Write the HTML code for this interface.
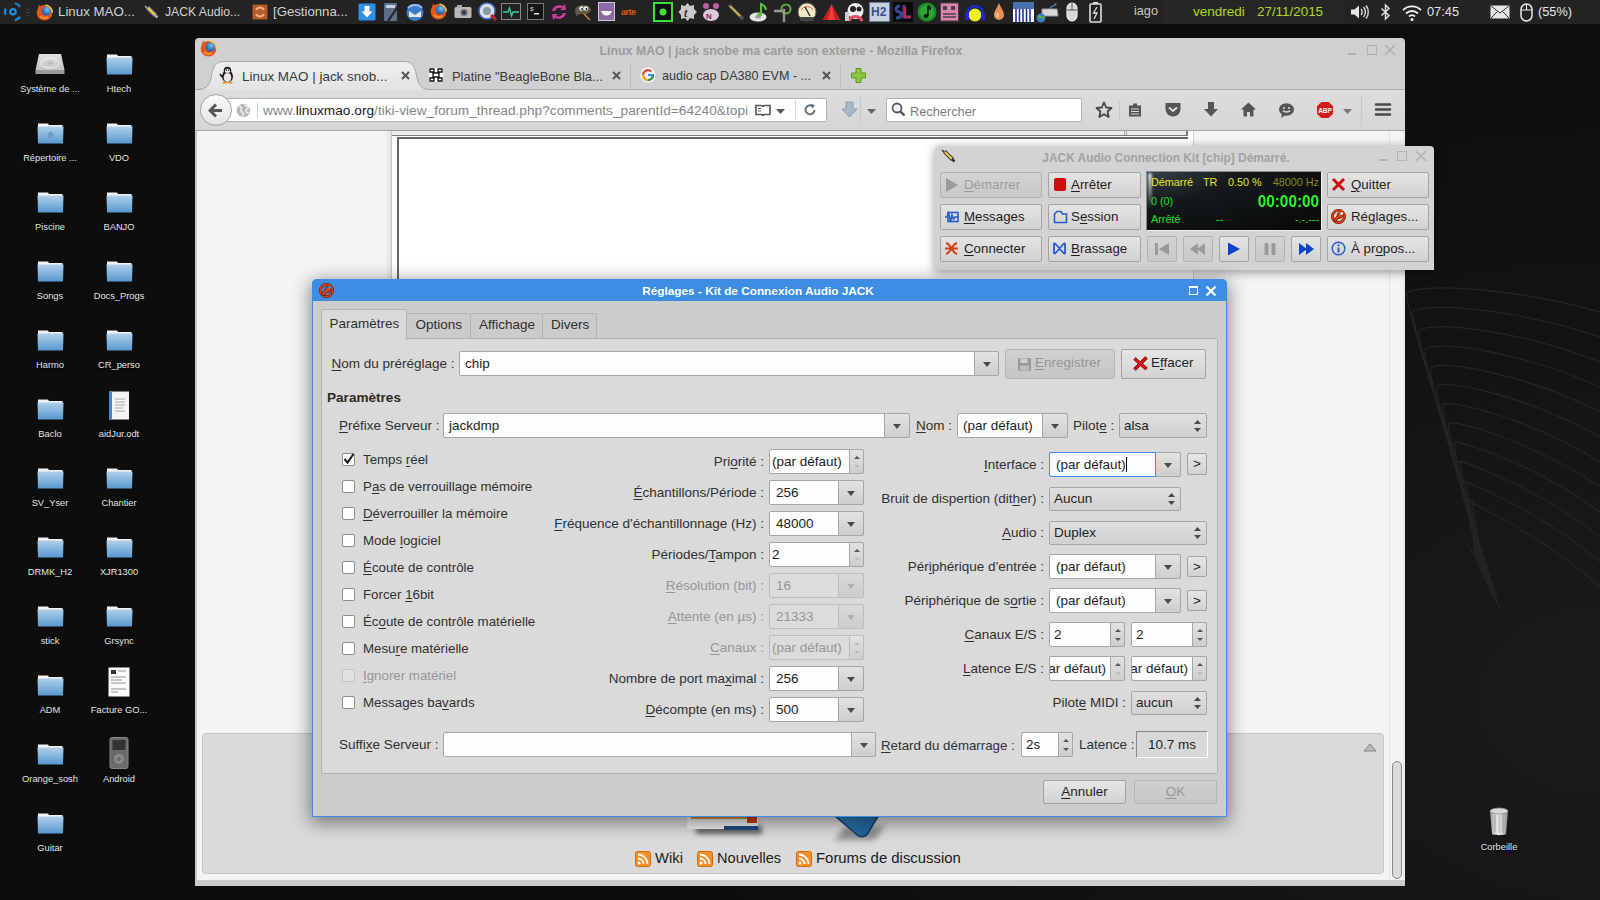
<!DOCTYPE html><html><head><meta charset="utf-8"><style>
html,body{margin:0;padding:0;} body{width:1600px;height:900px;overflow:hidden;position:relative;background:radial-gradient(ellipse 900px 700px at 1600px 700px, #1b1b1b 0%, #141414 45%, #0d0d0d 100%);font-family:'Liberation Sans', sans-serif;}
u{text-decoration:underline;text-underline-offset:2px;text-decoration-thickness:1px;}
</style></head><body>
<svg style="position:absolute;left:0;top:0" width="1600" height="900"><path d="M1600 312 C1530 292 1440 282 1407 292 C1403 296 1427 372 1500 610" stroke="#242424" stroke-width="1.3" fill="none"/><path d="M1600 337 C1530 313 1440 301 1413 311 C1409 315 1433 391 1497 604" stroke="#242424" stroke-width="1.3" fill="none"/><path d="M1600 362 C1530 334 1440 320 1419 330 C1415 334 1439 410 1494 598" stroke="#242424" stroke-width="1.3" fill="none"/><path d="M1600 387 C1530 355 1440 339 1425 349 C1421 353 1445 429 1491 592" stroke="#242424" stroke-width="1.3" fill="none"/><path d="M1600 412 C1530 376 1440 358 1431 368 C1427 372 1451 448 1488 586" stroke="#242424" stroke-width="1.3" fill="none"/><path d="M1600 437 C1530 397 1440 377 1437 387 C1433 391 1457 467 1485 580" stroke="#242424" stroke-width="1.3" fill="none"/><path d="M1600 462 C1530 418 1440 396 1443 406 C1439 410 1463 486 1482 574" stroke="#242424" stroke-width="1.3" fill="none"/><path d="M1600 487 C1530 439 1440 415 1449 425 C1445 429 1469 505 1479 568" stroke="#242424" stroke-width="1.3" fill="none"/><path d="M1600 512 C1530 460 1440 434 1455 444 C1451 448 1475 524 1476 562" stroke="#242424" stroke-width="1.3" fill="none"/><path d="M1600 537 C1530 481 1440 453 1461 463 C1457 467 1481 543 1473 556" stroke="#242424" stroke-width="1.3" fill="none"/><path d="M1600 562 C1530 502 1440 472 1467 482 C1463 486 1487 562 1470 550" stroke="#242424" stroke-width="1.3" fill="none"/><path d="M1600 587 C1530 523 1440 491 1473 501 C1469 505 1493 581 1467 544" stroke="#242424" stroke-width="1.3" fill="none"/></svg>
<div style="position:absolute;left:0px;top:0px;width:1600px;height:24px;background:#232323;"></div>
<svg style="position:absolute;left:0px;top:0px" width="22" height="22" viewBox="0 0 22 22"><circle cx="13" cy="11.7" r="2.7" fill="none" stroke="#1a8ee0" stroke-width="2.2"/><path d="M5.6 8.5 A8 8 0 0 0 5.6 14.9" stroke="#1a8ee0" stroke-width="2.2" fill="none"/><path d="M15 3.3 A8.6 8.6 0 0 1 20.1 6.8" stroke="#1a8ee0" stroke-width="2.2" fill="none"/><path d="M20.1 16.6 A8.6 8.6 0 0 1 15 20.1" stroke="#1a8ee0" stroke-width="2.2" fill="none"/></svg>
<div style="position:absolute;left:26px;top:9px;width:4px;height:1px;background:#3a3a3a;"></div>
<div style="position:absolute;left:26px;top:12px;width:4px;height:1px;background:#3a3a3a;"></div>
<div style="position:absolute;left:26px;top:15px;width:4px;height:1px;background:#3a3a3a;"></div>
<svg style="position:absolute;left:36px;top:4px" width="17" height="17" viewBox="0 0 17 17"><defs><radialGradient id="glb1" cx="0.6" cy="0.35" r="0.6"><stop offset="0" stop-color="#7ac0f0"/><stop offset="1" stop-color="#1f5fb0"/></radialGradient></defs><circle cx="8.5" cy="8.8" r="7.8" fill="#e4561a"/><circle cx="10.3" cy="6.9" r="4.6" fill="url(#glb1)"/><path d="M9.5 1 A7.8 7.8 0 0 1 16.3 8.5" stroke="#f8c23a" stroke-width="1.6" fill="none"/><path d="M1.8 5 L3 0.8 L5.6 3.5Z" fill="#e4561a"/><path d="M4 12 C6 14 9 14.5 12 13" stroke="#f39a30" stroke-width="1.4" fill="none"/></svg>
<div style="position:absolute;left:58px;top:3.0px;line-height:17px;font-size:13.3px;color:#d2d2d2;font-weight:normal;white-space:nowrap;">Linux MAO...</div>
<svg style="position:absolute;left:143px;top:4px" width="16" height="16" viewBox="0 0 16 16"><path d="M2 2 L5 5" stroke="#aaa" stroke-width="1.5"/><path d="M4.5 3.5 L12.5 11.5" stroke="#888" stroke-width="4"/><path d="M5 4 L12 11" stroke="#e8d040" stroke-width="2"/><path d="M12 11 L14.5 13.5" stroke="#aaa" stroke-width="2.5"/></svg>
<div style="position:absolute;left:165px;top:3.5px;line-height:16px;font-size:12.2px;color:#d2d2d2;font-weight:normal;white-space:nowrap;">JACK Audio...</div>
<svg style="position:absolute;left:252px;top:4px" width="16" height="16" viewBox="0 0 16 16"><rect x="0.5" y="0.5" width="15" height="15" fill="#b85a2a"/><path d="M4 6 A4.5 4.5 0 0 1 12 6 M12 10 A4.5 4.5 0 0 1 4 10" stroke="#f0b080" stroke-width="2" fill="none"/></svg>
<div style="position:absolute;left:273px;top:3.0px;line-height:17px;font-size:13.2px;color:#d2d2d2;font-weight:normal;white-space:nowrap;">[Gestionna...</div>
<svg style="position:absolute;left:358px;top:3px" width="18" height="18" viewBox="0 0 18 18"><rect x="0.5" y="0.5" width="17" height="17" rx="1" fill="#2c8fe8"/><path d="M6.5 3 H11.5 V8.5 H14.5 L9 14.5 L3.5 8.5 H6.5Z" fill="#fff"/></svg>
<svg style="position:absolute;left:383px;top:2px" width="17" height="20" viewBox="0 0 17 20"><rect x="1" y="1" width="13" height="18" rx="1" fill="#5a7085"/><rect x="3" y="3" width="9" height="3" fill="#ccd"/><path d="M16 3 L5 19" stroke="#222" stroke-width="2"/></svg>
<svg style="position:absolute;left:405px;top:3px" width="20" height="19" viewBox="0 0 20 19"><circle cx="10" cy="9.5" r="8.5" fill="#3c7cc8"/><path d="M4 8 L10 12 L16 8 V14 H4Z" fill="#e8e8e8"/><path d="M3 5 C6 1 14 1 17 5" stroke="#90c0f0" stroke-width="2" fill="none"/></svg>
<svg style="position:absolute;left:430px;top:3px" width="17" height="17" viewBox="0 0 17 17"><defs><radialGradient id="glb2" cx="0.6" cy="0.35" r="0.6"><stop offset="0" stop-color="#7ac0f0"/><stop offset="1" stop-color="#1f5fb0"/></radialGradient></defs><circle cx="8.5" cy="8.8" r="7.8" fill="#e4561a"/><circle cx="10.3" cy="6.9" r="4.6" fill="url(#glb2)"/><path d="M9.5 1 A7.8 7.8 0 0 1 16.3 8.5" stroke="#f8c23a" stroke-width="1.6" fill="none"/><path d="M1.8 5 L3 0.8 L5.6 3.5Z" fill="#e4561a"/><path d="M4 12 C6 14 9 14.5 12 13" stroke="#f39a30" stroke-width="1.4" fill="none"/></svg>
<svg style="position:absolute;left:454px;top:4px" width="18" height="15" viewBox="0 0 18 15"><rect x="0.5" y="3" width="17" height="11" rx="1.5" fill="#b8b8b8"/><rect x="3" y="1" width="5" height="3" fill="#aaa"/><circle cx="10" cy="8.5" r="3.5" fill="#6a6a7a"/><circle cx="10" cy="8.5" r="1.8" fill="#303040"/></svg>
<svg style="position:absolute;left:478px;top:2px" width="20" height="20" viewBox="0 0 20 20"><circle cx="9" cy="9" r="8" fill="#dde" stroke="#3a70c0" stroke-width="1.5"/><circle cx="9" cy="9" r="4" fill="#8898a8"/><path d="M13 13 L18 18" stroke="#d02020" stroke-width="3"/></svg>
<svg style="position:absolute;left:501px;top:3px" width="20" height="17" viewBox="0 0 20 17"><rect x="0.5" y="0.5" width="19" height="16" fill="#222" stroke="#888"/><path d="M2 9 H7 L8.5 5 L10.5 13 L12 9 H18" stroke="#3ad0a0" stroke-width="1.3" fill="none"/></svg>
<svg style="position:absolute;left:527px;top:3px" width="17" height="17" viewBox="0 0 17 17"><rect x="0.5" y="0.5" width="16" height="16" fill="#151515" stroke="#777"/><text x="3" y="8" font-size="6" fill="#eee" font-family="Liberation Mono">$</text><rect x="7" y="10" width="5" height="1.5" fill="#eee"/></svg>
<svg style="position:absolute;left:549px;top:2px" width="20" height="20" viewBox="0 0 20 20"><path d="M3 9 C4 4 9 2 14 4 L16 2 L17 8 L11 8 L13 6 C10 5 7 6 6 9Z" fill="#c83c98"/><path d="M17 11 C16 16 11 18 6 16 L4 18 L3 12 L9 12 L7 14 C10 15 13 14 14 11Z" fill="#c83c98"/></svg>
<svg style="position:absolute;left:574px;top:2px" width="18" height="19" viewBox="0 0 18 19"><path d="M1 8 C2 2 15 1 17 7 C17 12 10 13 6 12 L2 14Z" fill="#5e5a4a"/><circle cx="7.5" cy="6.5" r="2.3" fill="#f0f0f0"/><circle cx="12" cy="6.5" r="2.3" fill="#f0f0f0"/><circle cx="8" cy="7" r="1" fill="#222"/><circle cx="12.5" cy="7" r="1" fill="#222"/><path d="M10 12 L16 18" stroke="#c8802a" stroke-width="1.6"/></svg>
<svg style="position:absolute;left:598px;top:2px" width="17" height="19" viewBox="0 0 17 19"><rect x="0.5" y="0.5" width="16" height="18" fill="#8a6aa8" stroke="#ccc"/><path d="M3 9 C5 15 12 15 14 9Z" fill="#fff"/></svg>
<div style="position:absolute;left:621px;top:6.0px;line-height:12px;font-size:9px;color:#e05a10;font-weight:normal;white-space:nowrap;"><b style="letter-spacing:-0.5px">arte</b></div>
<svg style="position:absolute;left:653px;top:2px" width="20" height="20" viewBox="0 0 20 20"><rect x="1" y="1" width="18" height="18" fill="#111" stroke="#3ce03c" stroke-width="2"/><circle cx="10" cy="10" r="3.5" fill="#3ce03c"/></svg>
<svg style="position:absolute;left:678px;top:2px" width="19" height="20" viewBox="0 0 19 20"><path d="M9.5 1 L12 4 L16 3 L16 7 L19 10 L16 13 L16 17 L12 16 L9.5 19 L7 16 L3 17 L3 13 L0.5 10 L3 7 L3 3 L7 4Z" fill="#c8c8c8"/><text x="6" y="15" font-size="12" font-style="italic" font-weight="bold" fill="#333" font-family="Liberation Serif">t</text></svg>
<svg style="position:absolute;left:701px;top:2px" width="20" height="20" viewBox="0 0 20 20"><ellipse cx="10" cy="13" rx="8" ry="6" fill="#e0c8d8"/><circle cx="5" cy="4" r="3" fill="#c060a0"/><circle cx="15" cy="4" r="3" fill="#c060a0"/><text x="5" y="17" font-size="8" font-weight="bold" fill="#802060" font-family="Liberation Sans">N</text></svg>
<svg style="position:absolute;left:726px;top:2px" width="20" height="20" viewBox="0 0 20 20"><path d="M3 3 L17 17" stroke="#555" stroke-width="3.5"/><path d="M4 4 L14 14" stroke="#e0c040" stroke-width="1.6"/></svg>
<svg style="position:absolute;left:749px;top:2px" width="21" height="20" viewBox="0 0 21 20"><ellipse cx="9" cy="15" rx="8.5" ry="4.5" fill="#e6e6e6"/><ellipse cx="9" cy="15" rx="3" ry="1.5" fill="#9a9"/><path d="M12 14 V2 C14 3 17 4 17 8" stroke="#60c040" stroke-width="2" fill="none"/><ellipse cx="10" cy="13" rx="2.5" ry="2" fill="#60c040"/></svg>
<svg style="position:absolute;left:773px;top:2px" width="20" height="21" viewBox="0 0 20 21"><circle cx="13" cy="7" r="4.5" fill="none" stroke="#60b030" stroke-width="2"/><path d="M1 9 H9 M11 7 V20" stroke="#999" stroke-width="2.4"/></svg>
<svg style="position:absolute;left:797px;top:2px" width="20" height="20" viewBox="0 0 20 20"><circle cx="10" cy="10" r="9" fill="#f0e8c0" stroke="#666"/><path d="M4 8 A7 7 0 0 1 16 8" stroke="#d06060" stroke-width="1" fill="none"/><path d="M8 5 L13 14" stroke="#333" stroke-width="1.5"/><path d="M3 15 H17 V19 H3Z" fill="#444"/></svg>
<svg style="position:absolute;left:822px;top:3px" width="19" height="18" viewBox="0 0 19 18"><path d="M9.5 1 L18.5 17 H0.5Z" fill="#c82020"/><path d="M9.5 1 L13 17 H6Z" fill="#e84040"/></svg>
<svg style="position:absolute;left:845px;top:2px" width="21" height="21" viewBox="0 0 21 21"><circle cx="10.5" cy="9" r="8" fill="#f0f0f0"/><circle cx="8" cy="7" r="3" fill="#222"/><circle cx="14" cy="7" r="2.5" fill="#222"/><path d="M4 19 C6 13 15 13 17 19" stroke="#e05060" stroke-width="3" fill="none"/><rect x="0" y="10" width="4" height="9" fill="#ccc"/></svg>
<svg style="position:absolute;left:869px;top:2px" width="21" height="20" viewBox="0 0 21 20"><rect x="0.5" y="0.5" width="20" height="19" fill="#c8d0e0" stroke="#6878a0"/><text x="2" y="14" font-size="12" font-weight="bold" fill="#34508a" font-family="Liberation Sans">H2</text></svg>
<svg style="position:absolute;left:893px;top:2px" width="20" height="20" viewBox="0 0 20 20"><rect width="20" height="20" fill="#0a0a0a"/><path d="M7 4 C2 4 2 9 6 10 C10 11 9 16 3 16 M11 3 V15 H18" stroke="#3a4a90" stroke-width="3" fill="none"/><path d="M12 5 V15 H18" stroke="#b03050" stroke-width="2.5" fill="none"/></svg>
<svg style="position:absolute;left:917px;top:2px" width="20" height="20" viewBox="0 0 20 20"><circle cx="10" cy="10" r="9.5" fill="#1f8a2a"/><circle cx="10" cy="10" r="7" fill="#2aa830"/><path d="M11 4 V14" stroke="#111" stroke-width="1.6"/><ellipse cx="9" cy="14" rx="2.5" ry="2" fill="#111"/><path d="M11 4 C13 5 14 6 13 8" stroke="#111" stroke-width="1.5" fill="none"/></svg>
<svg style="position:absolute;left:940px;top:2px" width="19" height="20" viewBox="0 0 19 20"><rect x="0.5" y="1" width="18" height="18" rx="1" fill="#e080b0" stroke="#444"/><rect x="3" y="4" width="4" height="4" fill="#444"/><rect x="11" y="4" width="4" height="4" fill="#444"/><path d="M3 12 H16 M3 15 H16" stroke="#444" stroke-width="1.5"/></svg>
<svg style="position:absolute;left:964px;top:2px" width="22" height="20" viewBox="0 0 22 20"><path d="M3 12 A8 8 0 0 1 19 12" stroke="#1a2ad0" stroke-width="2.5" fill="none"/><ellipse cx="11" cy="13" rx="6.5" ry="6.5" fill="#f0f020"/><rect x="1" y="11" width="4" height="7" rx="1" fill="#1a2ad0"/><rect x="17" y="11" width="4" height="7" rx="1" fill="#1a2ad0"/></svg>
<svg style="position:absolute;left:993px;top:2px" width="12" height="20" viewBox="0 0 12 20"><path d="M6 1 C8 6 11 9 11 13 A5 5 0 0 1 1 13 C1 9 4 6 6 1Z" fill="#e89050"/><ellipse cx="4.5" cy="13" rx="1.5" ry="2.5" fill="#f8c090"/></svg>
<svg style="position:absolute;left:1013px;top:2px" width="21" height="20" viewBox="0 0 21 20"><rect x="0" y="0" width="21" height="7" fill="#4a70b0"/><rect x="0" y="7" width="21" height="13" fill="#fff"/><path d="M3 7 V20 M6.5 7 V20 M10 7 V20 M13.5 7 V20 M17 7 V20" stroke="#1a2a90" stroke-width="1.5"/></svg>
<svg style="position:absolute;left:1036px;top:2px" width="23" height="21" viewBox="0 0 23 21"><path d="M6 7 L21 7 L22 14 L6 14Z" fill="#d8d8d8" stroke="#999"/><path d="M14 7 C14 3 20 5 20 1" stroke="#6090c0" stroke-width="1.2" fill="none"/><circle cx="5" cy="16" r="4.5" fill="#3a80c0"/><path d="M2 15 C4 13 6 17 8 15" stroke="#60b040" stroke-width="2" fill="none"/></svg>
<svg style="position:absolute;left:1066px;top:2px" width="12" height="20" viewBox="0 0 12 20"><rect x="1" y="1" width="10" height="18" rx="5" fill="#d8d8d8" stroke="#fff"/><path d="M6 1 V8 M1 8 H11" stroke="#555" stroke-width="1"/></svg>
<svg style="position:absolute;left:1089px;top:1px" width="13" height="22" viewBox="0 0 13 22"><rect x="4" y="1" width="5" height="2" fill="#ddd"/><rect x="1" y="3" width="11" height="18" rx="1" fill="none" stroke="#ddd" stroke-width="1.6"/><path d="M8 6 L4.5 12 H8 L5 18" stroke="#ddd" stroke-width="1.3" fill="none"/></svg>
<div style="position:absolute;left:1162px;top:0px;width:183px;height:24px;background:#262626;"></div>
<div style="position:absolute;left:1134px;top:3.0px;line-height:17px;font-size:12.7px;color:#c8c8c8;font-weight:normal;white-space:nowrap;">iago</div>
<div style="position:absolute;left:1193px;top:2.5px;line-height:18px;font-size:13.5px;color:#aedb1e;font-weight:normal;white-space:nowrap;">vendredi</div>
<div style="position:absolute;left:1257px;top:3.0px;line-height:17px;font-size:13.4px;color:#aedb1e;font-weight:normal;white-space:nowrap;">27/11/2015</div>
<svg style="position:absolute;left:1350px;top:4px" width="19" height="16" viewBox="0 0 19 16"><path d="M1 5.5 H4.5 L9 1.5 V14.5 L4.5 10.5 H1Z" fill="#e8e8e8"/><path d="M11 5 C12.5 6.5 12.5 9.5 11 11 M13.5 3 C16 5.5 16 10.5 13.5 13 M16 1.5 C19 4.5 19 11.5 16 14.5" stroke="#e8e8e8" stroke-width="1.3" fill="none"/></svg>
<svg style="position:absolute;left:1380px;top:3px" width="11" height="18" viewBox="0 0 11 18"><path d="M1.5 5.5 L9 12.5 L5.5 16 V2 L9 5.5 L1.5 12.5" stroke="#e0e0e0" stroke-width="1.5" fill="none"/></svg>
<svg style="position:absolute;left:1401px;top:4px" width="22" height="17" viewBox="0 0 22 17"><path d="M2 6 A13 13 0 0 1 20 6 M5 9.5 A8.5 8.5 0 0 1 17 9.5 M8 12.5 A4.5 4.5 0 0 1 14 12.5" stroke="#f0f0f0" stroke-width="1.8" fill="none"/><circle cx="11" cy="15.5" r="1.5" fill="#f0f0f0"/></svg>
<div style="position:absolute;left:1427px;top:3.0px;line-height:17px;font-size:12.8px;color:#e8e8e8;font-weight:normal;white-space:nowrap;">07:45</div>
<svg style="position:absolute;left:1490px;top:5px" width="20" height="14" viewBox="0 0 20 14"><rect x="0.5" y="0.5" width="19" height="13" fill="#e8e8e8"/><path d="M1 1 L10 8 L19 1 M1 13 L7.5 6.5 M19 13 L12.5 6.5" stroke="#333" stroke-width="1" fill="none"/></svg>
<svg style="position:absolute;left:1520px;top:3px" width="13" height="19" viewBox="0 0 13 19"><rect x="1" y="1" width="11" height="17" rx="5.5" fill="none" stroke="#e8e8e8" stroke-width="1.5"/><path d="M6.5 1 V7 M1 7 H12" stroke="#e8e8e8" stroke-width="1.2"/></svg>
<div style="position:absolute;left:1538px;top:3.0px;line-height:17px;font-size:12.75px;color:#e8e8e8;font-weight:normal;white-space:nowrap;">(55%)</div>
<svg style="position:absolute;left:35px;top:53px" width="30" height="22" viewBox="0 0 30 22"><defs><linearGradient id="dg" x1="0" y1="0" x2="0" y2="1"><stop offset="0" stop-color="#e0e0e0"/><stop offset="1" stop-color="#c4c4c4"/></linearGradient></defs><path d="M4 1 H26 L29.5 17 H0.5Z" fill="url(#dg)"/><ellipse cx="15" cy="10" rx="9" ry="5" fill="none" stroke="#f4f4f4" stroke-width="1"/><ellipse cx="15" cy="10" rx="3" ry="1.5" fill="#bbb"/><rect x="0.5" y="17" width="29" height="4" fill="#9a9a9a"/></svg>
<div style="position:absolute;left:-150px;width:400px;text-align:center;top:82.8px;line-height:12px;font-size:9.3px;color:#e6e6e6;font-weight:normal;white-space:nowrap;text-shadow:0 1px 2px #000;">Système de ...</div>
<svg style="position:absolute;left:36.5px;top:122px" width="27" height="22" viewBox="0 0 27 22"><defs><linearGradient id="fg" x1="0" y1="0" x2="0" y2="1"><stop offset="0" stop-color="#b0d0ea"/><stop offset="1" stop-color="#5898cf"/></linearGradient></defs><path d="M1 1.5 H11 L12 3 H25.5 V5 H1Z" fill="#f2f2f2"/><path d="M0.5 4.5 H26.5 L26 21.5 H1Z" fill="url(#fg)"/><path d="M13.5 9 L17.5 13 H16 V16 H11 V13 H9.5Z" fill="#6a9cc8"/></svg>
<div style="position:absolute;left:-150px;width:400px;text-align:center;top:151.8px;line-height:12px;font-size:9.3px;color:#e6e6e6;font-weight:normal;white-space:nowrap;text-shadow:0 1px 2px #000;">Répertoire ...</div>
<svg style="position:absolute;left:36.5px;top:191px" width="27" height="22" viewBox="0 0 27 22"><defs><linearGradient id="fg" x1="0" y1="0" x2="0" y2="1"><stop offset="0" stop-color="#b0d0ea"/><stop offset="1" stop-color="#5898cf"/></linearGradient></defs><path d="M1 1.5 H11 L12 3 H25.5 V5 H1Z" fill="#f2f2f2"/><path d="M0.5 4.5 H26.5 L26 21.5 H1Z" fill="url(#fg)"/></svg>
<div style="position:absolute;left:-150px;width:400px;text-align:center;top:220.8px;line-height:12px;font-size:9.3px;color:#e6e6e6;font-weight:normal;white-space:nowrap;text-shadow:0 1px 2px #000;">Piscine</div>
<svg style="position:absolute;left:36.5px;top:260px" width="27" height="22" viewBox="0 0 27 22"><defs><linearGradient id="fg" x1="0" y1="0" x2="0" y2="1"><stop offset="0" stop-color="#b0d0ea"/><stop offset="1" stop-color="#5898cf"/></linearGradient></defs><path d="M1 1.5 H11 L12 3 H25.5 V5 H1Z" fill="#f2f2f2"/><path d="M0.5 4.5 H26.5 L26 21.5 H1Z" fill="url(#fg)"/></svg>
<div style="position:absolute;left:-150px;width:400px;text-align:center;top:289.8px;line-height:12px;font-size:9.3px;color:#e6e6e6;font-weight:normal;white-space:nowrap;text-shadow:0 1px 2px #000;">Songs</div>
<svg style="position:absolute;left:36.5px;top:329px" width="27" height="22" viewBox="0 0 27 22"><defs><linearGradient id="fg" x1="0" y1="0" x2="0" y2="1"><stop offset="0" stop-color="#b0d0ea"/><stop offset="1" stop-color="#5898cf"/></linearGradient></defs><path d="M1 1.5 H11 L12 3 H25.5 V5 H1Z" fill="#f2f2f2"/><path d="M0.5 4.5 H26.5 L26 21.5 H1Z" fill="url(#fg)"/></svg>
<div style="position:absolute;left:-150px;width:400px;text-align:center;top:358.8px;line-height:12px;font-size:9.3px;color:#e6e6e6;font-weight:normal;white-space:nowrap;text-shadow:0 1px 2px #000;">Harmo</div>
<svg style="position:absolute;left:36.5px;top:398px" width="27" height="22" viewBox="0 0 27 22"><defs><linearGradient id="fg" x1="0" y1="0" x2="0" y2="1"><stop offset="0" stop-color="#b0d0ea"/><stop offset="1" stop-color="#5898cf"/></linearGradient></defs><path d="M1 1.5 H11 L12 3 H25.5 V5 H1Z" fill="#f2f2f2"/><path d="M0.5 4.5 H26.5 L26 21.5 H1Z" fill="url(#fg)"/></svg>
<div style="position:absolute;left:-150px;width:400px;text-align:center;top:427.8px;line-height:12px;font-size:9.3px;color:#e6e6e6;font-weight:normal;white-space:nowrap;text-shadow:0 1px 2px #000;">Baclo</div>
<svg style="position:absolute;left:36.5px;top:467px" width="27" height="22" viewBox="0 0 27 22"><defs><linearGradient id="fg" x1="0" y1="0" x2="0" y2="1"><stop offset="0" stop-color="#b0d0ea"/><stop offset="1" stop-color="#5898cf"/></linearGradient></defs><path d="M1 1.5 H11 L12 3 H25.5 V5 H1Z" fill="#f2f2f2"/><path d="M0.5 4.5 H26.5 L26 21.5 H1Z" fill="url(#fg)"/></svg>
<div style="position:absolute;left:-150px;width:400px;text-align:center;top:496.8px;line-height:12px;font-size:9.3px;color:#e6e6e6;font-weight:normal;white-space:nowrap;text-shadow:0 1px 2px #000;">SV_Yser</div>
<svg style="position:absolute;left:36.5px;top:536px" width="27" height="22" viewBox="0 0 27 22"><defs><linearGradient id="fg" x1="0" y1="0" x2="0" y2="1"><stop offset="0" stop-color="#b0d0ea"/><stop offset="1" stop-color="#5898cf"/></linearGradient></defs><path d="M1 1.5 H11 L12 3 H25.5 V5 H1Z" fill="#f2f2f2"/><path d="M0.5 4.5 H26.5 L26 21.5 H1Z" fill="url(#fg)"/></svg>
<div style="position:absolute;left:-150px;width:400px;text-align:center;top:565.8px;line-height:12px;font-size:9.3px;color:#e6e6e6;font-weight:normal;white-space:nowrap;text-shadow:0 1px 2px #000;">DRMK_H2</div>
<svg style="position:absolute;left:36.5px;top:605px" width="27" height="22" viewBox="0 0 27 22"><defs><linearGradient id="fg" x1="0" y1="0" x2="0" y2="1"><stop offset="0" stop-color="#b0d0ea"/><stop offset="1" stop-color="#5898cf"/></linearGradient></defs><path d="M1 1.5 H11 L12 3 H25.5 V5 H1Z" fill="#f2f2f2"/><path d="M0.5 4.5 H26.5 L26 21.5 H1Z" fill="url(#fg)"/></svg>
<div style="position:absolute;left:-150px;width:400px;text-align:center;top:634.8px;line-height:12px;font-size:9.3px;color:#e6e6e6;font-weight:normal;white-space:nowrap;text-shadow:0 1px 2px #000;">stick</div>
<svg style="position:absolute;left:36.5px;top:674px" width="27" height="22" viewBox="0 0 27 22"><defs><linearGradient id="fg" x1="0" y1="0" x2="0" y2="1"><stop offset="0" stop-color="#b0d0ea"/><stop offset="1" stop-color="#5898cf"/></linearGradient></defs><path d="M1 1.5 H11 L12 3 H25.5 V5 H1Z" fill="#f2f2f2"/><path d="M0.5 4.5 H26.5 L26 21.5 H1Z" fill="url(#fg)"/></svg>
<div style="position:absolute;left:-150px;width:400px;text-align:center;top:703.8px;line-height:12px;font-size:9.3px;color:#e6e6e6;font-weight:normal;white-space:nowrap;text-shadow:0 1px 2px #000;">ADM</div>
<svg style="position:absolute;left:36.5px;top:743px" width="27" height="22" viewBox="0 0 27 22"><defs><linearGradient id="fg" x1="0" y1="0" x2="0" y2="1"><stop offset="0" stop-color="#b0d0ea"/><stop offset="1" stop-color="#5898cf"/></linearGradient></defs><path d="M1 1.5 H11 L12 3 H25.5 V5 H1Z" fill="#f2f2f2"/><path d="M0.5 4.5 H26.5 L26 21.5 H1Z" fill="url(#fg)"/></svg>
<div style="position:absolute;left:-150px;width:400px;text-align:center;top:772.8px;line-height:12px;font-size:9.3px;color:#e6e6e6;font-weight:normal;white-space:nowrap;text-shadow:0 1px 2px #000;">Orange_sosh</div>
<svg style="position:absolute;left:36.5px;top:812px" width="27" height="22" viewBox="0 0 27 22"><defs><linearGradient id="fg" x1="0" y1="0" x2="0" y2="1"><stop offset="0" stop-color="#b0d0ea"/><stop offset="1" stop-color="#5898cf"/></linearGradient></defs><path d="M1 1.5 H11 L12 3 H25.5 V5 H1Z" fill="#f2f2f2"/><path d="M0.5 4.5 H26.5 L26 21.5 H1Z" fill="url(#fg)"/></svg>
<div style="position:absolute;left:-150px;width:400px;text-align:center;top:841.8px;line-height:12px;font-size:9.3px;color:#e6e6e6;font-weight:normal;white-space:nowrap;text-shadow:0 1px 2px #000;">Guitar</div>
<svg style="position:absolute;left:105.5px;top:53px" width="27" height="22" viewBox="0 0 27 22"><defs><linearGradient id="fg" x1="0" y1="0" x2="0" y2="1"><stop offset="0" stop-color="#b0d0ea"/><stop offset="1" stop-color="#5898cf"/></linearGradient></defs><path d="M1 1.5 H11 L12 3 H25.5 V5 H1Z" fill="#f2f2f2"/><path d="M0.5 4.5 H26.5 L26 21.5 H1Z" fill="url(#fg)"/></svg>
<div style="position:absolute;left:-81px;width:400px;text-align:center;top:82.8px;line-height:12px;font-size:9.3px;color:#e6e6e6;font-weight:normal;white-space:nowrap;text-shadow:0 1px 2px #000;">Htech</div>
<svg style="position:absolute;left:105.5px;top:122px" width="27" height="22" viewBox="0 0 27 22"><defs><linearGradient id="fg" x1="0" y1="0" x2="0" y2="1"><stop offset="0" stop-color="#b0d0ea"/><stop offset="1" stop-color="#5898cf"/></linearGradient></defs><path d="M1 1.5 H11 L12 3 H25.5 V5 H1Z" fill="#f2f2f2"/><path d="M0.5 4.5 H26.5 L26 21.5 H1Z" fill="url(#fg)"/></svg>
<div style="position:absolute;left:-81px;width:400px;text-align:center;top:151.8px;line-height:12px;font-size:9.3px;color:#e6e6e6;font-weight:normal;white-space:nowrap;text-shadow:0 1px 2px #000;">VDO</div>
<svg style="position:absolute;left:105.5px;top:191px" width="27" height="22" viewBox="0 0 27 22"><defs><linearGradient id="fg" x1="0" y1="0" x2="0" y2="1"><stop offset="0" stop-color="#b0d0ea"/><stop offset="1" stop-color="#5898cf"/></linearGradient></defs><path d="M1 1.5 H11 L12 3 H25.5 V5 H1Z" fill="#f2f2f2"/><path d="M0.5 4.5 H26.5 L26 21.5 H1Z" fill="url(#fg)"/></svg>
<div style="position:absolute;left:-81px;width:400px;text-align:center;top:220.8px;line-height:12px;font-size:9.3px;color:#e6e6e6;font-weight:normal;white-space:nowrap;text-shadow:0 1px 2px #000;">BANJO</div>
<svg style="position:absolute;left:105.5px;top:260px" width="27" height="22" viewBox="0 0 27 22"><defs><linearGradient id="fg" x1="0" y1="0" x2="0" y2="1"><stop offset="0" stop-color="#b0d0ea"/><stop offset="1" stop-color="#5898cf"/></linearGradient></defs><path d="M1 1.5 H11 L12 3 H25.5 V5 H1Z" fill="#f2f2f2"/><path d="M0.5 4.5 H26.5 L26 21.5 H1Z" fill="url(#fg)"/></svg>
<div style="position:absolute;left:-81px;width:400px;text-align:center;top:289.8px;line-height:12px;font-size:9.3px;color:#e6e6e6;font-weight:normal;white-space:nowrap;text-shadow:0 1px 2px #000;">Docs_Progs</div>
<svg style="position:absolute;left:105.5px;top:329px" width="27" height="22" viewBox="0 0 27 22"><defs><linearGradient id="fg" x1="0" y1="0" x2="0" y2="1"><stop offset="0" stop-color="#b0d0ea"/><stop offset="1" stop-color="#5898cf"/></linearGradient></defs><path d="M1 1.5 H11 L12 3 H25.5 V5 H1Z" fill="#f2f2f2"/><path d="M0.5 4.5 H26.5 L26 21.5 H1Z" fill="url(#fg)"/></svg>
<div style="position:absolute;left:-81px;width:400px;text-align:center;top:358.8px;line-height:12px;font-size:9.3px;color:#e6e6e6;font-weight:normal;white-space:nowrap;text-shadow:0 1px 2px #000;">CR_perso</div>
<svg style="position:absolute;left:107px;top:391px" width="24" height="30" viewBox="0 0 24 30"><rect x="2" y="0.5" width="20" height="28" fill="#f4f4f4"/><rect x="2" y="0.5" width="3" height="28" fill="#3a8ad8"/><path d="M8 8 H18 M8 11 H18 M8 14 H18 M8 17 H16 M8 20 H18" stroke="#aaa" stroke-width="1"/></svg>
<div style="position:absolute;left:-81px;width:400px;text-align:center;top:427.8px;line-height:12px;font-size:9.3px;color:#e6e6e6;font-weight:normal;white-space:nowrap;text-shadow:0 1px 2px #000;">aidJur.odt</div>
<svg style="position:absolute;left:105.5px;top:467px" width="27" height="22" viewBox="0 0 27 22"><defs><linearGradient id="fg" x1="0" y1="0" x2="0" y2="1"><stop offset="0" stop-color="#b0d0ea"/><stop offset="1" stop-color="#5898cf"/></linearGradient></defs><path d="M1 1.5 H11 L12 3 H25.5 V5 H1Z" fill="#f2f2f2"/><path d="M0.5 4.5 H26.5 L26 21.5 H1Z" fill="url(#fg)"/></svg>
<div style="position:absolute;left:-81px;width:400px;text-align:center;top:496.8px;line-height:12px;font-size:9.3px;color:#e6e6e6;font-weight:normal;white-space:nowrap;text-shadow:0 1px 2px #000;">Chantier</div>
<svg style="position:absolute;left:105.5px;top:536px" width="27" height="22" viewBox="0 0 27 22"><defs><linearGradient id="fg" x1="0" y1="0" x2="0" y2="1"><stop offset="0" stop-color="#b0d0ea"/><stop offset="1" stop-color="#5898cf"/></linearGradient></defs><path d="M1 1.5 H11 L12 3 H25.5 V5 H1Z" fill="#f2f2f2"/><path d="M0.5 4.5 H26.5 L26 21.5 H1Z" fill="url(#fg)"/></svg>
<div style="position:absolute;left:-81px;width:400px;text-align:center;top:565.8px;line-height:12px;font-size:9.3px;color:#e6e6e6;font-weight:normal;white-space:nowrap;text-shadow:0 1px 2px #000;">XJR1300</div>
<svg style="position:absolute;left:105.5px;top:605px" width="27" height="22" viewBox="0 0 27 22"><defs><linearGradient id="fg" x1="0" y1="0" x2="0" y2="1"><stop offset="0" stop-color="#b0d0ea"/><stop offset="1" stop-color="#5898cf"/></linearGradient></defs><path d="M1 1.5 H11 L12 3 H25.5 V5 H1Z" fill="#f2f2f2"/><path d="M0.5 4.5 H26.5 L26 21.5 H1Z" fill="url(#fg)"/></svg>
<div style="position:absolute;left:-81px;width:400px;text-align:center;top:634.8px;line-height:12px;font-size:9.3px;color:#e6e6e6;font-weight:normal;white-space:nowrap;text-shadow:0 1px 2px #000;">Grsync</div>
<svg style="position:absolute;left:108px;top:667px" width="22" height="30" viewBox="0 0 22 30"><rect x="0.5" y="0.5" width="21" height="29" fill="#fafafa"/><rect x="3" y="3" width="5" height="4" fill="#333"/><path d="M10 4 H18 M3 10 H18 M3 13 H14 M3 16 H18 M3 22 H18 M3 25 H10" stroke="#777" stroke-width="0.8"/></svg>
<div style="position:absolute;left:-81px;width:400px;text-align:center;top:703.8px;line-height:12px;font-size:9.3px;color:#e6e6e6;font-weight:normal;white-space:nowrap;text-shadow:0 1px 2px #000;">Facture GO...</div>
<svg style="position:absolute;left:109px;top:737px" width="20" height="32" viewBox="0 0 20 32"><rect x="1" y="0.5" width="18" height="31" rx="2" fill="#6a6a6a" stroke="#888"/><rect x="3.5" y="3" width="13" height="10" fill="#333"/><circle cx="10" cy="22" r="5" fill="#8a8a8a"/><circle cx="10" cy="22" r="2" fill="#6a6a6a"/></svg>
<div style="position:absolute;left:-81px;width:400px;text-align:center;top:772.8px;line-height:12px;font-size:9.3px;color:#e6e6e6;font-weight:normal;white-space:nowrap;text-shadow:0 1px 2px #000;">Android</div>
<svg style="position:absolute;left:1488px;top:807px" width="22" height="29" viewBox="0 0 22 29"><defs><linearGradient id="tgr" x1="0" y1="0" x2="1" y2="0"><stop offset="0" stop-color="#9a9a9a"/><stop offset="0.45" stop-color="#f0f0f0"/><stop offset="1" stop-color="#8a8a8a"/></linearGradient></defs><path d="M2 4 L4 27 C4 28.5 18 28.5 18 27 L20 4Z" fill="url(#tgr)"/><ellipse cx="11" cy="4" rx="9" ry="3" fill="#d8d8d8" stroke="#888" stroke-width="0.8"/><path d="M7 8 V25 M11 8 V26 M15 8 V25" stroke="#999" stroke-width="0.8"/></svg>
<div style="position:absolute;left:1299px;width:400px;text-align:center;top:841.0px;line-height:12px;font-size:9.3px;color:#e6e6e6;font-weight:normal;white-space:nowrap;text-shadow:0 1px 2px #000;">Corbeille</div>
<div style="position:absolute;left:195px;top:38px;width:1210px;height:848px;background:#d0d0d0;border-radius:4px 4px 0 0;overflow:hidden;"></div>
<div style="position:absolute;left:581px;width:400px;text-align:center;top:43.0px;line-height:16px;font-size:12.35px;color:#9c9c9c;font-weight:bold;white-space:nowrap;">Linux MAO | jack snobe ma carte son externe - Mozilla Firefox</div>
<svg style="position:absolute;left:200px;top:40px" width="17" height="17" viewBox="0 0 17 17"><defs><radialGradient id="glb" cx="0.6" cy="0.35" r="0.6"><stop offset="0" stop-color="#7ac0f0"/><stop offset="1" stop-color="#1f5fb0"/></radialGradient></defs><circle cx="8.5" cy="8.8" r="7.8" fill="#e4561a"/><circle cx="10.3" cy="6.9" r="4.6" fill="url(#glb)"/><path d="M9.5 1 A7.8 7.8 0 0 1 16.3 8.5" stroke="#f8c23a" stroke-width="1.6" fill="none"/><path d="M1.8 5 L3 0.8 L5.6 3.5Z" fill="#e4561a"/><path d="M4 12 C6 14 9 14.5 12 13" stroke="#f39a30" stroke-width="1.4" fill="none"/></svg>
<div style="position:absolute;left:1348px;top:53px;width:8px;height:2px;background:#b0b0b0"></div>
<div style="position:absolute;left:1367px;top:45px;width:8px;height:8px;border:1px solid #b0b0b0"></div>
<svg style="position:absolute;left:1384px;top:44px" width="12" height="12"><path d="M1 1L11 11M11 1L1 11" stroke="#b0b0b0" stroke-width="1.6"/></svg>
<div style="position:absolute;left:195px;top:89px;width:1210px;height:1px;background:#a9a9a9;"></div>
<svg style="position:absolute;left:195px;top:60px" width="240" height="31" viewBox="0 0 240 31"><defs><linearGradient id="tg" x1="0" y1="0" x2="0" y2="1"><stop offset="0" stop-color="#efefef"/><stop offset="1" stop-color="#e3e3e3"/></linearGradient></defs><path d="M0 29.5 C10 29.5 14 27 16 18 C18 6 20 1.5 30 1.5 L208 1.5 C218 1.5 220 6 222 18 C224 27 228 29.5 236 29.5" fill="url(#tg)" stroke="#a8a8a8" stroke-width="1"/><rect x="8" y="29" width="222" height="2" fill="#e0e0e0"/></svg>
<svg style="position:absolute;left:219px;top:66px" width="17" height="18" viewBox="0 0 17 18"><ellipse cx="8.5" cy="10.5" rx="5.5" ry="6" fill="#1a1a1a"/><circle cx="8.5" cy="4.5" r="3.8" fill="#1a1a1a"/><ellipse cx="8.5" cy="11.5" rx="3.8" ry="4.5" fill="#e8e8e8"/><ellipse cx="8.5" cy="5" rx="2.6" ry="2.2" fill="#f0f0f0"/><circle cx="7.4" cy="4.3" r="0.7" fill="#111"/><circle cx="9.6" cy="4.3" r="0.7" fill="#111"/><path d="M7 6 H10 L8.5 7.5Z" fill="#f0a020"/><path d="M1 8 L3 11" stroke="#1a1a1a" stroke-width="1.5"/><ellipse cx="5.5" cy="16.8" rx="2.3" ry="1" fill="#f59a10"/><ellipse cx="11.5" cy="16.8" rx="2.3" ry="1" fill="#f59a10"/></svg>
<div style="position:absolute;left:242px;top:67.5px;line-height:17px;font-size:13.45px;color:#3a3a3a;font-weight:normal;white-space:nowrap;">Linux MAO | jack snob...</div>
<svg style="position:absolute;left:401px;top:71px" width="9" height="9"><path d="M1 1L8 8M8 1L1 8" stroke="#555" stroke-width="2"/></svg>
<svg style="position:absolute;left:428px;top:67px" width="16" height="16" viewBox="0 0 16 16"><rect x="1" y="1" width="14" height="14" fill="#fff"/><path d="M2 2h4v3h-4zM10 2h4v3h-4zM2 11h4v3h-4zM10 11h4v3h-4zM5 6h6v4h-6z" fill="none" stroke="#111" stroke-width="1.3"/></svg>
<div style="position:absolute;left:452px;top:67.5px;line-height:17px;font-size:12.9px;color:#3a3a3a;font-weight:normal;white-space:nowrap;">Platine "BeagleBone Bla...</div>
<svg style="position:absolute;left:612px;top:71px" width="9" height="9"><path d="M1 1L8 8M8 1L1 8" stroke="#555" stroke-width="2"/></svg>
<div style="position:absolute;left:630px;top:65px;width:1px;height:22px;background:#bdbdbd;"></div>
<svg style="position:absolute;left:640px;top:67px" width="16" height="16" viewBox="0 0 16 16"><circle cx="8" cy="8" r="7.5" fill="#fff"/><path d="M13 8 A5 5 0 1 1 11.5 4.5" stroke="#db4437" stroke-width="2.2" fill="none"/><path d="M3 8 A5 5 0 0 0 8 13" stroke="#f4b400" stroke-width="2.2" fill="none"/><path d="M8 13 A5 5 0 0 0 13 8 L8 8" stroke="#0f9d58" stroke-width="2.2" fill="none"/><path d="M8 8 H13" stroke="#4285f4" stroke-width="2.2"/></svg>
<div style="position:absolute;left:662px;top:68.0px;line-height:16px;font-size:12.6px;color:#3a3a3a;font-weight:normal;white-space:nowrap;">audio cap DA380 EVM - ...</div>
<svg style="position:absolute;left:822px;top:71px" width="9" height="9"><path d="M1 1L8 8M8 1L1 8" stroke="#555" stroke-width="2"/></svg>
<div style="position:absolute;left:840px;top:65px;width:1px;height:22px;background:#bdbdbd;"></div>
<svg style="position:absolute;left:850px;top:67px" width="17" height="17" viewBox="0 0 17 17"><path d="M6 1.5h5v4.5h4.5v5h-4.5v4.5h-5v-4.5h-4.5v-5h4.5z" fill="#8cc63f" stroke="#5a9a20" stroke-width="1"/></svg>
<div style="position:absolute;left:195px;top:90px;width:1210px;height:40px;background:linear-gradient(#dddddd,#d6d6d6);"></div>
<div style="position:absolute;left:195px;top:130px;width:1210px;height:1px;background:#a4a4a4;"></div>
<div style="position:absolute;left:218px;top:98px;width:609px;height:24px;background:#fff;border:1px solid #b4b4b4;border-radius:2px;box-sizing:border-box;"></div>
<div style="position:absolute;left:200px;top:94px;width:32px;height:32px;background:linear-gradient(#fafafa,#e4e4e4);border:1px solid #9aa4ae;border-radius:50%;box-sizing:border-box;"></div>
<svg style="position:absolute;left:208px;top:103px" width="16" height="15" viewBox="0 0 16 15"><path d="M8 1.5 L2 7.5 L8 13.5 M2.5 7.5 H14" stroke="#555" stroke-width="3" fill="none"/></svg>
<svg style="position:absolute;left:236px;top:103px" width="15" height="15" viewBox="0 0 15 15"><circle cx="7.5" cy="7.5" r="6.7" fill="#b8b8b8"/><path d="M3 3.5 C5 3 6 5 5 6.5 C4 8 6 9 7 10 C7.5 11 7 13 6 14 M8.5 1.5 C9 3 11 3 13 4 C12 6 10 6 10 8 C10 10 12 10 13.5 9" stroke="#f2f2f2" stroke-width="1.4" fill="none"/></svg>
<div style="position:absolute;left:257px;top:102px;width:1px;height:16px;background:#d4d4d4;"></div>
<div style="position:absolute;left:263px;top:102.0px;line-height:18px;font-size:13.69px;color:#333;font-weight:normal;white-space:nowrap;"><span style="color:#858585">www.</span><span style="color:#1a1a1a">linuxmao.org</span><span style="color:#858585">/tiki-view_forum_thread.php?comments_parentId=64240&amp;topi</span></div>
<svg style="position:absolute;left:755px;top:104px" width="16" height="13" viewBox="0 0 16 13"><path d="M1 1.5 H6 C7 1.5 8 2 8 3 C8 2 9 1.5 10 1.5 H15 V10.5 H10 C9 10.5 8 11 8 12 C8 11 7 10.5 6 10.5 H1Z" stroke="#555" stroke-width="1.6" fill="none"/><path d="M3 4.5 H6 M3 7 H6" stroke="#555" stroke-width="1"/></svg>
<svg style="position:absolute;left:776px;top:109px" width="10" height="6"><path d="M0 0H9L4.5 5Z" fill="#555"/></svg>
<div style="position:absolute;left:795px;top:100px;width:1px;height:20px;background:#d8d8d8;"></div>
<svg style="position:absolute;left:803px;top:103px" width="14" height="14" viewBox="0 0 14 14"><path d="M11.5 7 A4.5 4.5 0 1 1 9.5 3" stroke="#5f6f80" stroke-width="2" fill="none"/><path d="M8 0.5 L12 2.5 L9 5.5Z" fill="#5f6f80"/></svg>
<svg style="position:absolute;left:841px;top:101px" width="17" height="18" viewBox="0 0 17 18"><path d="M5 1H12V8H16L8.5 16L1 8H5Z" fill="#a9b7c6" stroke="#8f9cab" stroke-width="1"/></svg>
<div style="position:absolute;left:860px;top:96px;width:1px;height:30px;background:#c8c8c8;"></div>
<svg style="position:absolute;left:867px;top:109px" width="10" height="6"><path d="M0 0H9L4.5 5Z" fill="#666"/></svg>
<div style="position:absolute;left:886px;top:98px;width:196px;height:24px;background:#fff;border:1px solid #b4b4b4;border-radius:2px;box-sizing:border-box;"></div>
<svg style="position:absolute;left:891px;top:102px" width="15" height="15" viewBox="0 0 15 15"><circle cx="6" cy="6" r="4.5" stroke="#555" stroke-width="1.8" fill="none"/><path d="M9.3 9.3 L13.5 13.5" stroke="#555" stroke-width="2.4"/></svg>
<div style="position:absolute;left:910px;top:102.5px;line-height:17px;font-size:12.77px;color:#7a7a7a;font-weight:normal;white-space:nowrap;">Rechercher</div>
<svg style="position:absolute;left:1095px;top:101px" width="18" height="18" viewBox="0 0 18 18"><path d="M9 1.5 L11.2 6.5 L16.5 7 L12.5 10.6 L13.7 16 L9 13.2 L4.3 16 L5.5 10.6 L1.5 7 L6.8 6.5Z" stroke="#444" stroke-width="1.8" fill="none" stroke-linejoin="round"/></svg>
<div style="position:absolute;left:1119px;top:101px;width:1px;height:18px;background:#c8c8c8;"></div>
<svg style="position:absolute;left:1127px;top:102px" width="16" height="16" viewBox="0 0 16 16"><path d="M6 1.5h4v2h4v11h-12v-11h4z" fill="#555"/><path d="M4 7h8M4 9.5h8M4 12h8" stroke="#dcdcdc" stroke-width="1"/></svg>
<svg style="position:absolute;left:1164px;top:101px" width="18" height="17" viewBox="0 0 18 17"><path d="M1.5 2 H16.5 V8 A7.5 7.5 0 0 1 1.5 8Z" fill="#555"/><path d="M5 6.5 L9 10 L13 6.5" stroke="#dcdcdc" stroke-width="2" fill="none"/></svg>
<svg style="position:absolute;left:1203px;top:101px" width="16" height="17" viewBox="0 0 16 17"><path d="M5 1H11V8H15L8 15.5L1 8H5Z" fill="#555"/></svg>
<svg style="position:absolute;left:1240px;top:101px" width="17" height="17" viewBox="0 0 17 17"><path d="M8.5 1.5 L16 8.5 H13.5 V15.5 H10 V11 H7 V15.5 H3.5 V8.5 H1Z" fill="#555"/></svg>
<svg style="position:absolute;left:1278px;top:102px" width="17" height="17" viewBox="0 0 17 17"><ellipse cx="8.5" cy="7.5" rx="7.5" ry="6.2" fill="#555"/><path d="M4 12 L3 16 L8 13Z" fill="#555"/><path d="M5 8.5 C6.5 10.5 10.5 10.5 12 8.5" stroke="#e0e0e0" stroke-width="1.4" fill="none"/><circle cx="6" cy="6" r="1" fill="#e0e0e0"/><circle cx="11" cy="6" r="1" fill="#e0e0e0"/></svg>
<svg style="position:absolute;left:1316px;top:101px" width="18" height="18" viewBox="0 0 18 18"><path d="M5.3 1 H12.7 L17 5.3 V12.7 L12.7 17 H5.3 L1 12.7 V5.3Z" fill="#d41a1a"/><text x="9" y="12" font-size="6.5" font-weight="bold" fill="#fff" text-anchor="middle" font-family="Liberation Sans">ABP</text></svg>
<svg style="position:absolute;left:1343px;top:109px" width="10" height="6"><path d="M0 0H9L4.5 5Z" fill="#777"/></svg>
<div style="position:absolute;left:1361px;top:96px;width:1px;height:30px;background:#c8c8c8;"></div>
<svg style="position:absolute;left:1374px;top:102px" width="18" height="15" viewBox="0 0 18 15"><path d="M2 2.5H16M2 7.5H16M2 12.5H16" stroke="#4a4a4a" stroke-width="2.6" stroke-linecap="round"/></svg>
<div style="position:absolute;left:195px;top:131px;width:1210px;height:755px;background:#f4f4f4;"></div>
<div style="position:absolute;left:195px;top:131px;width:2px;height:755px;background:#c8c8c8;"></div>
<div style="position:absolute;left:1403px;top:131px;width:2px;height:749px;background:#ececec;"></div>
<div style="position:absolute;left:391px;top:131px;width:802px;height:600px;background:#fff;box-shadow:-3px 0 4px rgba(0,0,0,0.08);"></div>
<div style="position:absolute;left:392px;top:131px;width:796px;height:5px;background:#ececec;border-bottom:1px solid #7a7a7a;box-sizing:border-box;"></div>
<div style="position:absolute;left:1186px;top:131px;width:2px;height:5px;background:#777;"></div>
<div style="position:absolute;left:1124px;top:131px;width:1px;height:4px;background:#aaa;"></div>
<div style="position:absolute;left:1126px;top:131px;width:1px;height:4px;background:#aaa;"></div>
<div style="position:absolute;left:397px;top:137px;width:791px;height:300px;border-top:2px solid #666;border-left:2px solid #666;background:#fff;box-sizing:border-box;"></div>
<div style="position:absolute;left:391px;top:131px;width:1px;height:600px;background:#c8c8c8;"></div>
<div style="position:absolute;left:1193px;top:131px;width:197px;height:602px;background:#f4f4f4;border-left:1px solid #d0d0d0;"></div>
<div style="position:absolute;left:1389px;top:131px;width:1px;height:749px;background:#e2e2e2;"></div>
<div style="position:absolute;left:202px;top:733px;width:1182px;height:141px;background:#dadada;border:1px solid #c6c6c6;border-radius:4px;box-sizing:border-box;"></div>
<svg style="position:absolute;left:1363px;top:743px" width="14" height="9"><path d="M1 8 L7 1 L13 8Z" fill="#b8b8b8" stroke="#888" stroke-width="1"/></svg>
<div style="position:absolute;left:1392px;top:761px;width:10px;height:118px;border:1px solid #8a8a8a;border-radius:5px;background:#dcdcdc;box-sizing:border-box;"></div>
<div style="position:absolute;left:195px;top:880px;width:1210px;height:6px;background:#cdcdcd;"></div>
<div style="position:absolute;left:696px;top:826px;width:66px;height:8px;background:rgba(0,0,0,0.55);filter:blur(2.5px)"></div>
<div style="position:absolute;left:840px;top:826px;width:40px;height:14px;background:rgba(0,0,0,0.35);filter:blur(3px);transform:skewX(-30deg)"></div>
<svg style="position:absolute;left:680px;top:800px" width="220" height="50" viewBox="0 0 220 50"><defs><linearGradient id="bd" x1="0" y1="0" x2="1" y2="1"><stop offset="0" stop-color="#3a8cc8"/><stop offset="1" stop-color="#17568e"/></linearGradient></defs><rect x="7" y="10" width="71" height="19" fill="#eeeeee"/><rect x="44" y="26" width="34" height="4" fill="#1a4a80"/><rect x="11" y="16" width="57" height="3" fill="#d4902c"/><rect x="67" y="15" width="10" height="8" fill="#d03a10"/><path d="M148 10 L202 10 L188 33 C185 38 179 38 175 33 Z" fill="url(#bd)" stroke="#163c66" stroke-width="1.5"/></svg>
<svg style="position:absolute;left:635px;top:851px" width="16" height="16" viewBox="0 0 16 16"><rect x="0.5" y="0.5" width="15" height="15" rx="2" fill="#f4902a" stroke="#d26a10"/><circle cx="4" cy="12" r="1.6" fill="#fff"/><path d="M3 7.5 A5.5 5.5 0 0 1 8.5 13 M3 3.5 A9.5 9.5 0 0 1 12.5 13" stroke="#fff" stroke-width="1.8" fill="none"/></svg>
<div style="position:absolute;left:655px;top:848.5px;line-height:19px;font-size:14.8px;color:#1a1a1a;font-weight:normal;white-space:nowrap;">Wiki</div>
<svg style="position:absolute;left:697px;top:851px" width="16" height="16" viewBox="0 0 16 16"><rect x="0.5" y="0.5" width="15" height="15" rx="2" fill="#f4902a" stroke="#d26a10"/><circle cx="4" cy="12" r="1.6" fill="#fff"/><path d="M3 7.5 A5.5 5.5 0 0 1 8.5 13 M3 3.5 A9.5 9.5 0 0 1 12.5 13" stroke="#fff" stroke-width="1.8" fill="none"/></svg>
<div style="position:absolute;left:717px;top:848.5px;line-height:19px;font-size:14.6px;color:#1a1a1a;font-weight:normal;white-space:nowrap;">Nouvelles</div>
<svg style="position:absolute;left:796px;top:851px" width="16" height="16" viewBox="0 0 16 16"><rect x="0.5" y="0.5" width="15" height="15" rx="2" fill="#f4902a" stroke="#d26a10"/><circle cx="4" cy="12" r="1.6" fill="#fff"/><path d="M3 7.5 A5.5 5.5 0 0 1 8.5 13 M3 3.5 A9.5 9.5 0 0 1 12.5 13" stroke="#fff" stroke-width="1.8" fill="none"/></svg>
<div style="position:absolute;left:816px;top:848.5px;line-height:19px;font-size:14.9px;color:#1a1a1a;font-weight:normal;white-space:nowrap;">Forums de discussion</div>
<div style="position:absolute;left:935px;top:146px;width:499px;height:124px;background:#d3d3d3;border-radius:4px 4px 0 0;box-shadow:0 2px 10px 1px rgba(0,0,0,0.35);"></div>
<div style="position:absolute;left:966px;width:400px;text-align:center;top:150.8px;line-height:15px;font-size:11.9px;color:#a2a2a2;font-weight:bold;white-space:nowrap;">JACK Audio Connection Kit [chip] Démarré.</div>
<svg style="position:absolute;left:940px;top:148px" width="16" height="16" viewBox="0 0 16 16"><path d="M2 2 L5 5" stroke="#333" stroke-width="1.5"/><path d="M4.5 3.5 L12.5 11.5" stroke="#444" stroke-width="4"/><path d="M5 4 L12 11" stroke="#e8d040" stroke-width="2"/><path d="M12 11 L14.5 13.5" stroke="#333" stroke-width="2.5"/></svg>
<div style="position:absolute;left:1379px;top:159px;width:8px;height:2px;background:#b4b4b4"></div>
<div style="position:absolute;left:1397px;top:151px;width:8px;height:8px;border:1px solid #b4b4b4"></div>
<svg style="position:absolute;left:1415px;top:150px" width="12" height="12"><path d="M1 1L11 11M11 1L1 11" stroke="#b4b4b4" stroke-width="1.6"/></svg>
<div style="position:absolute;left:940px;top:172px;width:102px;height:26px;background:linear-gradient(#d4d4d4,#c8c8c8);border:1px solid #b2b2b2;border-radius:2px;box-sizing:border-box;"></div>
<div style="position:absolute;left:964px;top:175.5px;line-height:17px;font-size:13.3px;color:#9c9c9c;font-weight:normal;white-space:nowrap;"><u>D</u>émarrer</div>
<svg style="position:absolute;left:945px;top:177px" width="14" height="16"><path d="M1 1 L13 8 L1 15Z" fill="#9a9a9a"/></svg>
<div style="position:absolute;left:1048px;top:172px;width:93px;height:26px;background:linear-gradient(#e4e4e4,#d2d2d2);border:1px solid #a4a4a4;border-radius:2px;box-sizing:border-box;"></div>
<div style="position:absolute;left:1071px;top:175.5px;line-height:17px;font-size:13.3px;color:#1e1e1e;font-weight:normal;white-space:nowrap;"><u>A</u>rrêter</div>
<div style="position:absolute;left:1054px;top:178px;width:12px;height:13px;background:#d00c0c;border-radius:2px;"></div>
<div style="position:absolute;left:940px;top:204px;width:102px;height:26px;background:linear-gradient(#e4e4e4,#d2d2d2);border:1px solid #a4a4a4;border-radius:2px;box-sizing:border-box;"></div>
<div style="position:absolute;left:964px;top:207.5px;line-height:17px;font-size:13.3px;color:#1e1e1e;font-weight:normal;white-space:nowrap;"><u>M</u>essages</div>
<svg style="position:absolute;left:944px;top:209px" width="16" height="16" viewBox="0 0 16 16"><rect x="4" y="3.5" width="10" height="9" fill="none" stroke="#2a5ad0" stroke-width="1.6"/><path d="M1 8 H3 L4.5 3 L6.5 13 L8 6 L9.5 10 L11 8 H15" stroke="#2a5ad0" stroke-width="1.6" fill="none"/></svg>
<div style="position:absolute;left:1048px;top:204px;width:93px;height:26px;background:linear-gradient(#e4e4e4,#d2d2d2);border:1px solid #a4a4a4;border-radius:2px;box-sizing:border-box;"></div>
<div style="position:absolute;left:1071px;top:207.5px;line-height:17px;font-size:13.3px;color:#1e1e1e;font-weight:normal;white-space:nowrap;">S<u>e</u>ssion</div>
<svg style="position:absolute;left:1053px;top:210px" width="15" height="14" viewBox="0 0 15 14"><path d="M1.5 12.5 V4 L4 1.5 H8 L9.5 4 H13.5 V12.5Z" fill="none" stroke="#2a5ad0" stroke-width="1.6"/></svg>
<div style="position:absolute;left:940px;top:236px;width:102px;height:26px;background:linear-gradient(#e4e4e4,#d2d2d2);border:1px solid #a4a4a4;border-radius:2px;box-sizing:border-box;"></div>
<div style="position:absolute;left:964px;top:239.5px;line-height:17px;font-size:13.3px;color:#1e1e1e;font-weight:normal;white-space:nowrap;"><u>C</u>onnecter</div>
<svg style="position:absolute;left:944px;top:241px" width="15" height="15" viewBox="0 0 15 15"><path d="M1 7.5 H14 M2 2 C7 3 8 12 13 13 M2 13 C7 12 8 3 13 2" stroke="#d04010" stroke-width="2" fill="none"/></svg>
<div style="position:absolute;left:1048px;top:236px;width:93px;height:26px;background:linear-gradient(#e4e4e4,#d2d2d2);border:1px solid #a4a4a4;border-radius:2px;box-sizing:border-box;"></div>
<div style="position:absolute;left:1071px;top:239.5px;line-height:17px;font-size:13.3px;color:#1e1e1e;font-weight:normal;white-space:nowrap;"><u>B</u>rassage</div>
<svg style="position:absolute;left:1052px;top:241px" width="15" height="15" viewBox="0 0 15 15"><path d="M2 2 V13 M13 2 V13 M2 2 C6 4 9 11 13 13 M2 13 C6 11 9 4 13 2" stroke="#2a5ad0" stroke-width="1.8" fill="none"/></svg>
<div style="position:absolute;left:1327px;top:172px;width:102px;height:26px;background:linear-gradient(#e4e4e4,#d2d2d2);border:1px solid #a4a4a4;border-radius:2px;box-sizing:border-box;"></div>
<div style="position:absolute;left:1351px;top:175.5px;line-height:17px;font-size:13.3px;color:#1e1e1e;font-weight:normal;white-space:nowrap;"><u>Q</u>uitter</div>
<svg style="position:absolute;left:1331px;top:177px" width="15" height="15"><path d="M2 2 L13 13 M13 2 L2 13" stroke="#d01010" stroke-width="3"/></svg>
<div style="position:absolute;left:1327px;top:204px;width:102px;height:26px;background:linear-gradient(#e4e4e4,#d2d2d2);border:1px solid #a4a4a4;border-radius:2px;box-sizing:border-box;"></div>
<div style="position:absolute;left:1351px;top:207.5px;line-height:17px;font-size:13.3px;color:#1e1e1e;font-weight:normal;white-space:nowrap;">Ré<u>g</u>lages...</div>
<svg style="position:absolute;left:1331px;top:209px" width="15" height="15" viewBox="0 0 15 15"><circle cx="7.5" cy="7.5" r="6.1" fill="none" stroke="#6a1804" stroke-width="2.8"/><circle cx="7.5" cy="7.5" r="6.1" fill="none" stroke="#dc4212" stroke-width="1.6"/><path d="M4.2 11 L7.8 7.4" stroke="#6a1804" stroke-width="3.6" stroke-linecap="round"/><circle cx="8.8" cy="6.4" r="3.1" fill="#6a1804"/><path d="M4.2 11 L7.8 7.4" stroke="#dc4212" stroke-width="2.4" stroke-linecap="round"/><circle cx="8.8" cy="6.4" r="2.4" fill="#dc4212"/><circle cx="10.6" cy="4.6" r="1.5" fill="#dcdcdc"/></svg>
<div style="position:absolute;left:1327px;top:236px;width:102px;height:26px;background:linear-gradient(#e4e4e4,#d2d2d2);border:1px solid #a4a4a4;border-radius:2px;box-sizing:border-box;"></div>
<div style="position:absolute;left:1351px;top:239.5px;line-height:17px;font-size:13.3px;color:#1e1e1e;font-weight:normal;white-space:nowrap;">À pr<u>o</u>pos...</div>
<svg style="position:absolute;left:1331px;top:241px" width="15" height="15" viewBox="0 0 15 15"><circle cx="7.5" cy="7.5" r="6.3" fill="none" stroke="#2a5ad0" stroke-width="1.5"/><circle cx="7.5" cy="4.3" r="1.1" fill="#2a5ad0"/><path d="M7.5 6.5 V11.5" stroke="#2a5ad0" stroke-width="2"/></svg>
<div style="position:absolute;left:1146px;top:171px;width:176px;height:60px;background:radial-gradient(ellipse at 0% 0%, #3a4248 0%, #15191b 35%, #070808 100%);border:1px solid #f0f0f0;border-top-color:#8a8a8a;border-left-color:#8a8a8a;box-sizing:border-box;"></div>
<div style="position:absolute;left:1148px;top:173px;width:4px;height:36px;background:linear-gradient(#e8f4f8,rgba(120,140,150,0));opacity:0.9;filter:blur(1px);border-radius:2px"></div>
<div style="position:absolute;left:1151px;top:175.2px;line-height:14px;font-size:10.8px;color:#e6e81c;font-weight:normal;white-space:nowrap;">Démarré</div>
<div style="position:absolute;left:1203px;top:175.2px;line-height:14px;font-size:10.8px;color:#e6e81c;font-weight:normal;white-space:nowrap;">TR</div>
<div style="position:absolute;left:1228px;top:175.2px;line-height:14px;font-size:10.8px;color:#e6e81c;font-weight:normal;white-space:nowrap;">0.50 %</div>
<div style="position:absolute;right:281px;top:175.2px;line-height:14px;font-size:10.8px;color:#8c8a1e;font-weight:normal;white-space:nowrap;">48000 Hz</div>
<div style="position:absolute;left:1151px;top:194.2px;line-height:14px;font-size:10.8px;color:#22e022;font-weight:normal;white-space:nowrap;">0 (0)</div>
<div style="position:absolute;right:281px;top:191.2px;line-height:20px;font-size:15.3px;color:#22ff22;font-weight:bold;white-space:nowrap;transform:scaleY(1.12);">00:00:00</div>
<div style="position:absolute;left:1151px;top:212.2px;line-height:14px;font-size:10.8px;color:#22e022;font-weight:normal;white-space:nowrap;">Arrêté</div>
<div style="position:absolute;left:1216px;top:212.2px;line-height:14px;font-size:10.8px;color:#22e022;font-weight:normal;white-space:nowrap;">--</div>
<div style="position:absolute;right:281px;top:212.2px;line-height:14px;font-size:10.8px;color:#22e022;font-weight:normal;white-space:nowrap;">-.-.---</div>
<div style="position:absolute;left:1147px;top:236px;width:30px;height:26px;background:linear-gradient(#d4d4d4,#c8c8c8);border:1px solid #b2b2b2;border-radius:2px;box-sizing:border-box;"></div>
<div style="position:absolute;left:1183px;top:236px;width:30px;height:26px;background:linear-gradient(#d4d4d4,#c8c8c8);border:1px solid #b2b2b2;border-radius:2px;box-sizing:border-box;"></div>
<div style="position:absolute;left:1219px;top:236px;width:30px;height:26px;background:linear-gradient(#e4e4e4,#d2d2d2);border:1px solid #a4a4a4;border-radius:2px;box-sizing:border-box;"></div>
<div style="position:absolute;left:1255px;top:236px;width:30px;height:26px;background:linear-gradient(#d4d4d4,#c8c8c8);border:1px solid #b2b2b2;border-radius:2px;box-sizing:border-box;"></div>
<div style="position:absolute;left:1291px;top:236px;width:30px;height:26px;background:linear-gradient(#e4e4e4,#d2d2d2);border:1px solid #a4a4a4;border-radius:2px;box-sizing:border-box;"></div>
<svg style="position:absolute;left:1153px;top:241px" width="18" height="16"><rect x="2" y="2" width="3" height="12" fill="#9a9a9a"/><path d="M16 2 L6 8 L16 14Z" fill="#9a9a9a"/></svg>
<svg style="position:absolute;left:1188px;top:241px" width="20" height="16"><path d="M10 2 L2 8 L10 14Z M17 2 L9 8 L17 14Z" fill="#9a9a9a"/></svg>
<svg style="position:absolute;left:1226px;top:241px" width="16" height="16"><path d="M2 1.5 L14 8 L2 14.5Z" fill="#1040d0"/></svg>
<svg style="position:absolute;left:1262px;top:241px" width="16" height="16"><rect x="2.5" y="2" width="4" height="12" rx="1" fill="#9a9a9a"/><rect x="9.5" y="2" width="4" height="12" rx="1" fill="#9a9a9a"/></svg>
<svg style="position:absolute;left:1297px;top:241px" width="20" height="16"><path d="M2 2 L10 8 L2 14Z M9 2 L17 8 L9 14Z" fill="#1040d0"/></svg>
<div style="position:absolute;left:312px;top:279px;width:915px;height:538px;background:#cdcdcd;border:1px solid #3c8de3;border-top:none;box-sizing:border-box;border-radius:5px 5px 0 0;box-shadow:0 4px 18px 2px rgba(0,0,0,0.45);"></div>
<div style="position:absolute;left:312px;top:279px;width:915px;height:22px;background:#3c8de3;border-radius:5px 5px 0 0;"></div>
<div style="position:absolute;left:558px;width:400px;text-align:center;top:283.5px;line-height:15px;font-size:11.8px;color:#ffffff;font-weight:bold;white-space:nowrap;">Réglages - Kit de Connexion Audio JACK</div>
<svg style="position:absolute;left:319px;top:283px" width="15" height="15" viewBox="0 0 15 15"><circle cx="7.5" cy="7.5" r="6.1" fill="none" stroke="#6a1804" stroke-width="2.8"/><circle cx="7.5" cy="7.5" r="6.1" fill="none" stroke="#dc4212" stroke-width="1.6"/><path d="M4.2 11 L7.8 7.4" stroke="#6a1804" stroke-width="3.6" stroke-linecap="round"/><circle cx="8.8" cy="6.4" r="3.1" fill="#6a1804"/><path d="M4.2 11 L7.8 7.4" stroke="#dc4212" stroke-width="2.4" stroke-linecap="round"/><circle cx="8.8" cy="6.4" r="2.4" fill="#dc4212"/><circle cx="10.6" cy="4.6" r="1.5" fill="#3c8de3"/></svg>
<div style="position:absolute;left:1189px;top:286px;width:9px;height:9px;border:1.5px solid #fff;border-top-width:2.5px;box-sizing:border-box;"></div>
<svg style="position:absolute;left:1205px;top:285px" width="12" height="12"><path d="M1.5 1.5L10.5 10.5M10.5 1.5L1.5 10.5" stroke="#fff" stroke-width="2.2"/></svg>
<div style="position:absolute;left:406px;top:313px;width:65px;height:26px;background:#cbcbcb;border:1px solid #b4b4b4;border-bottom:none;border-radius:2px 2px 0 0;box-sizing:border-box;"></div>
<div style="position:absolute;left:470px;top:313px;width:73px;height:26px;background:#cbcbcb;border:1px solid #b4b4b4;border-bottom:none;border-radius:2px 2px 0 0;box-sizing:border-box;"></div>
<div style="position:absolute;left:542px;top:313px;width:55px;height:26px;background:#cbcbcb;border:1px solid #b4b4b4;border-bottom:none;border-radius:2px 2px 0 0;box-sizing:border-box;"></div>
<div style="position:absolute;left:321px;top:338px;width:897px;height:436px;background:#dadada;border:1px solid #b2b2b2;border-radius:0 2px 2px 2px;box-sizing:border-box;"></div>
<div style="position:absolute;left:321px;top:309px;width:86px;height:31px;background:#dadada;border:1px solid #b2b2b2;border-bottom:none;border-radius:2px 2px 0 0;box-sizing:border-box;"></div>
<div style="position:absolute;left:329.5px;top:314.5px;line-height:18px;font-size:13.5px;color:#2e2e2e;font-weight:normal;white-space:nowrap;">Paramètres</div>
<div style="position:absolute;left:415.5px;top:315.5px;line-height:18px;font-size:13.5px;color:#2e2e2e;font-weight:normal;white-space:nowrap;">Options</div>
<div style="position:absolute;left:479px;top:315.5px;line-height:18px;font-size:13.5px;color:#2e2e2e;font-weight:normal;white-space:nowrap;">Affichage</div>
<div style="position:absolute;left:551px;top:315.5px;line-height:18px;font-size:13.5px;color:#2e2e2e;font-weight:normal;white-space:nowrap;">Divers</div>
<div style="position:absolute;left:331.5px;top:354.5px;line-height:18px;font-size:13.5px;color:#303030;font-weight:normal;white-space:nowrap;"><u>N</u>om du préréglage :</div>
<div style="position:absolute;left:459px;top:351px;width:540px;height:25px;background:#fdfdfd;border:1px solid #a6a6a6;border-radius:2px;box-sizing:border-box;"></div>
<div style="position:absolute;left:974px;top:351px;width:25px;height:25px;background:linear-gradient(#e2e2e2,#cecece);border:1px solid #a6a6a6;border-radius:0 2px 2px 0;box-sizing:border-box;"></div>
<svg style="position:absolute;left:982.5px;top:362.0px" width="8" height="5"><path d="M0 0H8L4.0 5Z" fill="#4a4a4a"/></svg>
<div style="position:absolute;left:465px;top:354.5px;line-height:18px;font-size:13.5px;color:#1e1e1e;font-weight:normal;white-space:nowrap;">chip</div>
<div style="position:absolute;left:1005px;top:349px;width:110px;height:30px;background:linear-gradient(#d0d0d0,#c6c6c6);border:1px solid #b6b6b6;border-radius:2px;box-sizing:border-box;"></div>
<div style="position:absolute;left:1035px;top:354.3px;line-height:18px;font-size:13.5px;color:#969696;font-weight:normal;white-space:nowrap;"><u>E</u>nregistrer</div>
<svg style="position:absolute;left:1017px;top:357px" width="15" height="15" viewBox="0 0 15 15"><rect x="1" y="1" width="13" height="13" rx="1" fill="#9a9a9a"/><rect x="3.5" y="1.5" width="7" height="4.5" fill="#cfcfcf"/><rect x="3" y="8.5" width="9" height="5" fill="#bdbdbd"/></svg>
<div style="position:absolute;left:1121px;top:349px;width:85px;height:30px;background:linear-gradient(#e6e6e6,#d2d2d2);border:1px solid #a2a2a2;border-radius:2px;box-sizing:border-box;"></div>
<div style="position:absolute;left:1151px;top:354.3px;line-height:18px;font-size:13.5px;color:#1e1e1e;font-weight:normal;white-space:nowrap;">E<u>f</u>facer</div>
<svg style="position:absolute;left:1133px;top:356px" width="15" height="15" viewBox="0 0 15 15"><path d="M1.5 2.5 L13.5 13 M13.5 1.5 L1.5 13.5" stroke="#5a0000" stroke-width="3.4"/><path d="M1.5 2.5 L13.5 13 M13.5 1.5 L1.5 13.5" stroke="#e01010" stroke-width="2.4"/></svg>
<div style="position:absolute;left:327px;top:389.0px;line-height:18px;font-size:13.58px;color:#2a2a2a;font-weight:bold;white-space:nowrap;">Paramètres</div>
<div style="position:absolute;left:339px;top:416.5px;line-height:18px;font-size:13.5px;color:#303030;font-weight:normal;white-space:nowrap;"><u>P</u>réfixe Serveur :</div>
<div style="position:absolute;left:443px;top:413px;width:467px;height:25px;background:#fdfdfd;border:1px solid #a6a6a6;border-radius:2px;box-sizing:border-box;"></div>
<div style="position:absolute;left:884px;top:413px;width:26px;height:25px;background:linear-gradient(#e2e2e2,#cecece);border:1px solid #a6a6a6;border-radius:0 2px 2px 0;box-sizing:border-box;"></div>
<svg style="position:absolute;left:893.0px;top:424.0px" width="8" height="5"><path d="M0 0H8L4.0 5Z" fill="#4a4a4a"/></svg>
<div style="position:absolute;left:449px;top:416.5px;line-height:18px;font-size:13.5px;color:#1e1e1e;font-weight:normal;white-space:nowrap;">jackdmp</div>
<div style="position:absolute;left:916px;top:416.5px;line-height:18px;font-size:13.5px;color:#303030;font-weight:normal;white-space:nowrap;"><u>N</u>om :</div>
<div style="position:absolute;left:957px;top:413px;width:111px;height:25px;background:#fdfdfd;border:1px solid #a6a6a6;border-radius:2px;box-sizing:border-box;"></div>
<div style="position:absolute;left:1042px;top:413px;width:26px;height:25px;background:linear-gradient(#e2e2e2,#cecece);border:1px solid #a6a6a6;border-radius:0 2px 2px 0;box-sizing:border-box;"></div>
<svg style="position:absolute;left:1051.0px;top:424.0px" width="8" height="5"><path d="M0 0H8L4.0 5Z" fill="#4a4a4a"/></svg>
<div style="position:absolute;left:963px;top:416.5px;line-height:18px;font-size:13.5px;color:#1e1e1e;font-weight:normal;white-space:nowrap;">(par défaut)</div>
<div style="position:absolute;left:1073px;top:416.5px;line-height:18px;font-size:13.5px;color:#303030;font-weight:normal;white-space:nowrap;">Pilot<u>e</u> :</div>
<div style="position:absolute;left:1119px;top:413px;width:88px;height:25px;background:linear-gradient(#e0e0e0,#d0d0d0);border:1px solid #a6a6a6;border-radius:2px;box-sizing:border-box;"></div>
<svg style="position:absolute;left:1193.5px;top:417.5px" width="7" height="16"><path d="M0 6H7L3.5 2Z" fill="#4a4a4a"/><path d="M0 10H7L3.5 14Z" fill="#4a4a4a"/></svg>
<div style="position:absolute;left:1124px;top:416.5px;line-height:18px;font-size:13.5px;color:#1e1e1e;font-weight:normal;white-space:nowrap;">alsa</div>
<div style="position:absolute;left:342px;top:453px;width:13px;height:13px;background:#fdfdfd;border:1px solid #8e8e8e;border-radius:2px;box-sizing:border-box;"></div>
<svg style="position:absolute;left:342px;top:452px" width="14" height="14"><path d="M2.5 7 L5.5 10.5 L11.5 2" stroke="#1a1a1a" stroke-width="2" fill="none"/></svg>
<div style="position:absolute;left:363px;top:451.0px;line-height:17px;font-size:13.3px;color:#303030;font-weight:normal;white-space:nowrap;">Temps <u>r</u>éel</div>
<div style="position:absolute;left:342px;top:480px;width:13px;height:13px;background:#fdfdfd;border:1px solid #8e8e8e;border-radius:2px;box-sizing:border-box;"></div>
<div style="position:absolute;left:363px;top:478.0px;line-height:17px;font-size:13.3px;color:#303030;font-weight:normal;white-space:nowrap;">P<u>a</u>s de verrouillage mémoire</div>
<div style="position:absolute;left:342px;top:507px;width:13px;height:13px;background:#fdfdfd;border:1px solid #8e8e8e;border-radius:2px;box-sizing:border-box;"></div>
<div style="position:absolute;left:363px;top:505.0px;line-height:17px;font-size:13.3px;color:#303030;font-weight:normal;white-space:nowrap;"><u>D</u>éverrouiller la mémoire</div>
<div style="position:absolute;left:342px;top:534px;width:13px;height:13px;background:#fdfdfd;border:1px solid #8e8e8e;border-radius:2px;box-sizing:border-box;"></div>
<div style="position:absolute;left:363px;top:532.0px;line-height:17px;font-size:13.3px;color:#303030;font-weight:normal;white-space:nowrap;">Mode <u>l</u>ogiciel</div>
<div style="position:absolute;left:342px;top:561px;width:13px;height:13px;background:#fdfdfd;border:1px solid #8e8e8e;border-radius:2px;box-sizing:border-box;"></div>
<div style="position:absolute;left:363px;top:559.0px;line-height:17px;font-size:13.3px;color:#303030;font-weight:normal;white-space:nowrap;"><u>É</u>coute de contrôle</div>
<div style="position:absolute;left:342px;top:588px;width:13px;height:13px;background:#fdfdfd;border:1px solid #8e8e8e;border-radius:2px;box-sizing:border-box;"></div>
<div style="position:absolute;left:363px;top:586.0px;line-height:17px;font-size:13.3px;color:#303030;font-weight:normal;white-space:nowrap;">Forcer <u>1</u>6bit</div>
<div style="position:absolute;left:342px;top:615px;width:13px;height:13px;background:#fdfdfd;border:1px solid #8e8e8e;border-radius:2px;box-sizing:border-box;"></div>
<div style="position:absolute;left:363px;top:613.0px;line-height:17px;font-size:13.3px;color:#303030;font-weight:normal;white-space:nowrap;">Éc<u>o</u>ute de contrôle matérielle</div>
<div style="position:absolute;left:342px;top:642px;width:13px;height:13px;background:#fdfdfd;border:1px solid #8e8e8e;border-radius:2px;box-sizing:border-box;"></div>
<div style="position:absolute;left:363px;top:640.0px;line-height:17px;font-size:13.3px;color:#303030;font-weight:normal;white-space:nowrap;">Mesu<u>r</u>e matérielle</div>
<div style="position:absolute;left:342px;top:669px;width:13px;height:13px;background:#e2e2e2;border:1px solid #c4c4c4;border-radius:2px;box-sizing:border-box;"></div>
<div style="position:absolute;left:363px;top:667.0px;line-height:17px;font-size:13.3px;color:#969696;font-weight:normal;white-space:nowrap;"><u>I</u>gnorer matériel</div>
<div style="position:absolute;left:342px;top:696px;width:13px;height:13px;background:#fdfdfd;border:1px solid #8e8e8e;border-radius:2px;box-sizing:border-box;"></div>
<div style="position:absolute;left:363px;top:694.0px;line-height:17px;font-size:13.3px;color:#303030;font-weight:normal;white-space:nowrap;">Messages ba<u>v</u>ards</div>
<div style="position:absolute;right:836px;top:452.5px;line-height:18px;font-size:13.5px;color:#303030;font-weight:normal;white-space:nowrap;">Pri<u>o</u>rité :</div>
<div style="position:absolute;left:769px;top:449px;width:95px;height:25px;background:#fdfdfd;border:1px solid #a6a6a6;border-radius:2px;box-sizing:border-box;"></div>
<div style="position:absolute;left:849px;top:449px;width:15px;height:25px;background:linear-gradient(#e2e2e2,#cecece);border:1px solid #a6a6a6;border-radius:0 2px 2px 0;box-sizing:border-box;"></div>
<svg style="position:absolute;left:853.5px;top:453.5px" width="6" height="16"><path d="M0 5H6L3 2Z" fill="#555"/><path d="M0 11H6L3 14Z" fill="#bdbdbd"/></svg>
<div style="position:absolute;left:772px;top:452.5px;line-height:18px;font-size:13.5px;color:#1e1e1e;font-weight:normal;white-space:nowrap;">(par défaut)</div>
<div style="position:absolute;right:836px;top:483.5px;line-height:18px;font-size:13.5px;color:#303030;font-weight:normal;white-space:nowrap;"><u>É</u>chantillons/Période :</div>
<div style="position:absolute;left:769px;top:480px;width:95px;height:25px;background:#fdfdfd;border:1px solid #a6a6a6;border-radius:2px;box-sizing:border-box;"></div>
<div style="position:absolute;left:838px;top:480px;width:26px;height:25px;background:linear-gradient(#e2e2e2,#cecece);border:1px solid #a6a6a6;border-radius:0 2px 2px 0;box-sizing:border-box;"></div>
<svg style="position:absolute;left:847.0px;top:491.0px" width="8" height="5"><path d="M0 0H8L4.0 5Z" fill="#4a4a4a"/></svg>
<div style="position:absolute;left:776px;top:483.5px;line-height:18px;font-size:13.5px;color:#1e1e1e;font-weight:normal;white-space:nowrap;">256</div>
<div style="position:absolute;right:836px;top:514.5px;line-height:18px;font-size:13.5px;color:#303030;font-weight:normal;white-space:nowrap;"><u>F</u>réquence d'échantillonnage (Hz) :</div>
<div style="position:absolute;left:769px;top:511px;width:95px;height:25px;background:#fdfdfd;border:1px solid #a6a6a6;border-radius:2px;box-sizing:border-box;"></div>
<div style="position:absolute;left:838px;top:511px;width:26px;height:25px;background:linear-gradient(#e2e2e2,#cecece);border:1px solid #a6a6a6;border-radius:0 2px 2px 0;box-sizing:border-box;"></div>
<svg style="position:absolute;left:847.0px;top:522.0px" width="8" height="5"><path d="M0 0H8L4.0 5Z" fill="#4a4a4a"/></svg>
<div style="position:absolute;left:776px;top:514.5px;line-height:18px;font-size:13.5px;color:#1e1e1e;font-weight:normal;white-space:nowrap;">48000</div>
<div style="position:absolute;right:836px;top:545.5px;line-height:18px;font-size:13.5px;color:#303030;font-weight:normal;white-space:nowrap;">Périodes/<u>T</u>ampon :</div>
<div style="position:absolute;left:769px;top:542px;width:95px;height:25px;background:#fdfdfd;border:1px solid #a6a6a6;border-radius:2px;box-sizing:border-box;"></div>
<div style="position:absolute;left:849px;top:542px;width:15px;height:25px;background:linear-gradient(#e2e2e2,#cecece);border:1px solid #a6a6a6;border-radius:0 2px 2px 0;box-sizing:border-box;"></div>
<svg style="position:absolute;left:853.5px;top:546.5px" width="6" height="16"><path d="M0 5H6L3 2Z" fill="#555"/><path d="M0 11H6L3 14Z" fill="#bdbdbd"/></svg>
<div style="position:absolute;left:772px;top:545.5px;line-height:18px;font-size:13.5px;color:#1e1e1e;font-weight:normal;white-space:nowrap;">2</div>
<div style="position:absolute;right:836px;top:576.5px;line-height:18px;font-size:13.5px;color:#969696;font-weight:normal;white-space:nowrap;"><u>R</u>ésolution (bit) :</div>
<div style="position:absolute;left:769px;top:573px;width:95px;height:25px;background:#dcdcdc;border:1px solid #bdbdbd;border-radius:2px;box-sizing:border-box;"></div>
<div style="position:absolute;left:838px;top:573px;width:26px;height:25px;background:linear-gradient(#d9d9d9,#cdcdcd);border:1px solid #bdbdbd;border-radius:0 2px 2px 0;box-sizing:border-box;"></div>
<svg style="position:absolute;left:847.0px;top:584.0px" width="8" height="5"><path d="M0 0H8L4.0 5Z" fill="#b0b0b0"/></svg>
<div style="position:absolute;left:776px;top:576.5px;line-height:18px;font-size:13.5px;color:#969696;font-weight:normal;white-space:nowrap;">16</div>
<div style="position:absolute;right:836px;top:607.5px;line-height:18px;font-size:13.5px;color:#969696;font-weight:normal;white-space:nowrap;"><u>A</u>ttente (en µs) :</div>
<div style="position:absolute;left:769px;top:604px;width:95px;height:25px;background:#dcdcdc;border:1px solid #bdbdbd;border-radius:2px;box-sizing:border-box;"></div>
<div style="position:absolute;left:838px;top:604px;width:26px;height:25px;background:linear-gradient(#d9d9d9,#cdcdcd);border:1px solid #bdbdbd;border-radius:0 2px 2px 0;box-sizing:border-box;"></div>
<svg style="position:absolute;left:847.0px;top:615.0px" width="8" height="5"><path d="M0 0H8L4.0 5Z" fill="#b0b0b0"/></svg>
<div style="position:absolute;left:776px;top:607.5px;line-height:18px;font-size:13.5px;color:#969696;font-weight:normal;white-space:nowrap;">21333</div>
<div style="position:absolute;right:836px;top:638.5px;line-height:18px;font-size:13.5px;color:#969696;font-weight:normal;white-space:nowrap;"><u>C</u>anaux :</div>
<div style="position:absolute;left:769px;top:635px;width:95px;height:25px;background:#dcdcdc;border:1px solid #bdbdbd;border-radius:2px;box-sizing:border-box;"></div>
<div style="position:absolute;left:849px;top:635px;width:15px;height:25px;background:linear-gradient(#e2e2e2,#cecece);border:1px solid #bdbdbd;border-radius:0 2px 2px 0;box-sizing:border-box;"></div>
<svg style="position:absolute;left:853.5px;top:639.5px" width="6" height="16"><path d="M0 5H6L3 2Z" fill="#bdbdbd"/><path d="M0 11H6L3 14Z" fill="#bdbdbd"/></svg>
<div style="position:absolute;left:772px;top:638.5px;line-height:18px;font-size:13.5px;color:#969696;font-weight:normal;white-space:nowrap;">(par défaut)</div>
<div style="position:absolute;right:836px;top:669.5px;line-height:18px;font-size:13.5px;color:#303030;font-weight:normal;white-space:nowrap;">Nombre de port ma<u>x</u>imal :</div>
<div style="position:absolute;left:769px;top:666px;width:95px;height:25px;background:#fdfdfd;border:1px solid #a6a6a6;border-radius:2px;box-sizing:border-box;"></div>
<div style="position:absolute;left:838px;top:666px;width:26px;height:25px;background:linear-gradient(#e2e2e2,#cecece);border:1px solid #a6a6a6;border-radius:0 2px 2px 0;box-sizing:border-box;"></div>
<svg style="position:absolute;left:847.0px;top:677.0px" width="8" height="5"><path d="M0 0H8L4.0 5Z" fill="#4a4a4a"/></svg>
<div style="position:absolute;left:776px;top:669.5px;line-height:18px;font-size:13.5px;color:#1e1e1e;font-weight:normal;white-space:nowrap;">256</div>
<div style="position:absolute;right:836px;top:700.5px;line-height:18px;font-size:13.5px;color:#303030;font-weight:normal;white-space:nowrap;"><u>D</u>écompte (en ms) :</div>
<div style="position:absolute;left:769px;top:697px;width:95px;height:25px;background:#fdfdfd;border:1px solid #a6a6a6;border-radius:2px;box-sizing:border-box;"></div>
<div style="position:absolute;left:838px;top:697px;width:26px;height:25px;background:linear-gradient(#e2e2e2,#cecece);border:1px solid #a6a6a6;border-radius:0 2px 2px 0;box-sizing:border-box;"></div>
<svg style="position:absolute;left:847.0px;top:708.0px" width="8" height="5"><path d="M0 0H8L4.0 5Z" fill="#4a4a4a"/></svg>
<div style="position:absolute;left:776px;top:700.5px;line-height:18px;font-size:13.5px;color:#1e1e1e;font-weight:normal;white-space:nowrap;">500</div>
<div style="position:absolute;right:556px;top:455.5px;line-height:18px;font-size:13.5px;color:#303030;font-weight:normal;white-space:nowrap;"><u>I</u>nterface :</div>
<div style="position:absolute;left:1049px;top:452px;width:132px;height:25px;background:#fdfdfd;border:1px solid #a6a6a6;border-radius:2px;box-sizing:border-box;"></div>
<div style="position:absolute;left:1155px;top:452px;width:26px;height:25px;background:linear-gradient(#e2e2e2,#cecece);border:1px solid #a6a6a6;border-radius:0 2px 2px 0;box-sizing:border-box;"></div>
<div style="position:absolute;left:1049px;top:452px;width:107px;height:25px;border:1px solid #3d8ee4;border-radius:2px 0 0 2px;box-sizing:border-box;"></div>
<svg style="position:absolute;left:1164.0px;top:463.0px" width="8" height="5"><path d="M0 0H8L4.0 5Z" fill="#4a4a4a"/></svg>
<div style="position:absolute;left:1056px;top:455.5px;line-height:18px;font-size:13.5px;color:#1e1e1e;font-weight:normal;white-space:nowrap;">(par défaut)<span style='display:inline-block;width:1px;height:15px;background:#111;vertical-align:-3px'></span></div>
<div style="position:absolute;left:1187px;top:453px;width:20px;height:22px;background:linear-gradient(#e6e6e6,#d2d2d2);border:1px solid #a2a2a2;border-radius:2px;box-sizing:border-box;"></div>
<div style="position:absolute;left:997.0px;width:400px;text-align:center;top:455.0px;line-height:18px;font-size:13.5px;color:#1e1e1e;font-weight:normal;white-space:nowrap;">&gt;</div>
<div style="position:absolute;right:556px;top:489.5px;line-height:18px;font-size:13.5px;color:#303030;font-weight:normal;white-space:nowrap;">Bruit de dispertion (dit<u>h</u>er) :</div>
<div style="position:absolute;left:1049px;top:487px;width:132px;height:24px;background:linear-gradient(#e0e0e0,#d0d0d0);border:1px solid #a6a6a6;border-radius:2px;box-sizing:border-box;"></div>
<svg style="position:absolute;left:1167.5px;top:491.0px" width="7" height="16"><path d="M0 6H7L3.5 2Z" fill="#4a4a4a"/><path d="M0 10H7L3.5 14Z" fill="#4a4a4a"/></svg>
<div style="position:absolute;left:1054px;top:490.0px;line-height:18px;font-size:13.5px;color:#1e1e1e;font-weight:normal;white-space:nowrap;">Aucun</div>
<div style="position:absolute;right:556px;top:523.5px;line-height:18px;font-size:13.5px;color:#303030;font-weight:normal;white-space:nowrap;"><u>A</u>udio :</div>
<div style="position:absolute;left:1049px;top:521px;width:158px;height:24px;background:linear-gradient(#e0e0e0,#d0d0d0);border:1px solid #a6a6a6;border-radius:2px;box-sizing:border-box;"></div>
<svg style="position:absolute;left:1193.5px;top:525.0px" width="7" height="16"><path d="M0 6H7L3.5 2Z" fill="#4a4a4a"/><path d="M0 10H7L3.5 14Z" fill="#4a4a4a"/></svg>
<div style="position:absolute;left:1054px;top:524.0px;line-height:18px;font-size:13.5px;color:#1e1e1e;font-weight:normal;white-space:nowrap;">Duplex</div>
<div style="position:absolute;right:556px;top:557.5px;line-height:18px;font-size:13.5px;color:#303030;font-weight:normal;white-space:nowrap;">Pér<u>i</u>phérique d'entrée :</div>
<div style="position:absolute;left:1049px;top:554px;width:132px;height:25px;background:#fdfdfd;border:1px solid #a6a6a6;border-radius:2px;box-sizing:border-box;"></div>
<div style="position:absolute;left:1155px;top:554px;width:26px;height:25px;background:linear-gradient(#e2e2e2,#cecece);border:1px solid #a6a6a6;border-radius:0 2px 2px 0;box-sizing:border-box;"></div>
<svg style="position:absolute;left:1164.0px;top:565.0px" width="8" height="5"><path d="M0 0H8L4.0 5Z" fill="#4a4a4a"/></svg>
<div style="position:absolute;left:1056px;top:557.5px;line-height:18px;font-size:13.5px;color:#1e1e1e;font-weight:normal;white-space:nowrap;">(par défaut)</div>
<div style="position:absolute;left:1187px;top:556px;width:20px;height:21px;background:linear-gradient(#e6e6e6,#d2d2d2);border:1px solid #a2a2a2;border-radius:2px;box-sizing:border-box;"></div>
<div style="position:absolute;left:997.0px;width:400px;text-align:center;top:557.5px;line-height:18px;font-size:13.5px;color:#1e1e1e;font-weight:normal;white-space:nowrap;">&gt;</div>
<div style="position:absolute;right:556px;top:591.5px;line-height:18px;font-size:13.5px;color:#303030;font-weight:normal;white-space:nowrap;">Périphérique de s<u>o</u>rtie :</div>
<div style="position:absolute;left:1049px;top:588px;width:132px;height:25px;background:#fdfdfd;border:1px solid #a6a6a6;border-radius:2px;box-sizing:border-box;"></div>
<div style="position:absolute;left:1155px;top:588px;width:26px;height:25px;background:linear-gradient(#e2e2e2,#cecece);border:1px solid #a6a6a6;border-radius:0 2px 2px 0;box-sizing:border-box;"></div>
<svg style="position:absolute;left:1164.0px;top:599.0px" width="8" height="5"><path d="M0 0H8L4.0 5Z" fill="#4a4a4a"/></svg>
<div style="position:absolute;left:1056px;top:591.5px;line-height:18px;font-size:13.5px;color:#1e1e1e;font-weight:normal;white-space:nowrap;">(par défaut)</div>
<div style="position:absolute;left:1187px;top:590px;width:20px;height:21px;background:linear-gradient(#e6e6e6,#d2d2d2);border:1px solid #a2a2a2;border-radius:2px;box-sizing:border-box;"></div>
<div style="position:absolute;left:997.0px;width:400px;text-align:center;top:591.5px;line-height:18px;font-size:13.5px;color:#1e1e1e;font-weight:normal;white-space:nowrap;">&gt;</div>
<div style="position:absolute;right:556px;top:625.5px;line-height:18px;font-size:13.5px;color:#303030;font-weight:normal;white-space:nowrap;"><u>C</u>anaux E/S :</div>
<div style="position:absolute;left:1049px;top:622px;width:76px;height:25px;background:#fdfdfd;border:1px solid #a6a6a6;border-radius:2px;box-sizing:border-box;"></div>
<div style="position:absolute;left:1110px;top:622px;width:15px;height:25px;background:linear-gradient(#e2e2e2,#cecece);border:1px solid #a6a6a6;border-radius:0 2px 2px 0;box-sizing:border-box;"></div>
<svg style="position:absolute;left:1114.5px;top:626.5px" width="6" height="16"><path d="M0 5H6L3 2Z" fill="#555"/><path d="M0 11H6L3 14Z" fill="#555"/></svg>
<div style="position:absolute;left:1054px;top:625.5px;line-height:18px;font-size:13.5px;color:#1e1e1e;font-weight:normal;white-space:nowrap;">2</div>
<div style="position:absolute;left:1131px;top:622px;width:76px;height:25px;background:#fdfdfd;border:1px solid #a6a6a6;border-radius:2px;box-sizing:border-box;"></div>
<div style="position:absolute;left:1192px;top:622px;width:15px;height:25px;background:linear-gradient(#e2e2e2,#cecece);border:1px solid #a6a6a6;border-radius:0 2px 2px 0;box-sizing:border-box;"></div>
<svg style="position:absolute;left:1196.5px;top:626.5px" width="6" height="16"><path d="M0 5H6L3 2Z" fill="#555"/><path d="M0 11H6L3 14Z" fill="#555"/></svg>
<div style="position:absolute;left:1136px;top:625.5px;line-height:18px;font-size:13.5px;color:#1e1e1e;font-weight:normal;white-space:nowrap;">2</div>
<div style="position:absolute;right:556px;top:659.5px;line-height:18px;font-size:13.5px;color:#303030;font-weight:normal;white-space:nowrap;"><u>L</u>atence E/S :</div>
<div style="position:absolute;left:1049px;top:656px;width:76px;height:25px;background:#fdfdfd;border:1px solid #a6a6a6;border-radius:2px;box-sizing:border-box;"></div>
<div style="position:absolute;left:1110px;top:656px;width:15px;height:25px;background:linear-gradient(#e2e2e2,#cecece);border:1px solid #a6a6a6;border-radius:0 2px 2px 0;box-sizing:border-box;"></div>
<svg style="position:absolute;left:1114.5px;top:660.5px" width="6" height="16"><path d="M0 5H6L3 2Z" fill="#555"/><path d="M0 11H6L3 14Z" fill="#bdbdbd"/></svg>
<div style="position:absolute;left:1050px;top:657px;width:60px;height:23px;overflow:hidden"><div style="position:absolute;right:4px;top:2.5px;line-height:18px;font-size:13.5px;color:#1e1e1e;white-space:nowrap">(par défaut)</div></div>
<div style="position:absolute;left:1131px;top:656px;width:76px;height:25px;background:#fdfdfd;border:1px solid #a6a6a6;border-radius:2px;box-sizing:border-box;"></div>
<div style="position:absolute;left:1192px;top:656px;width:15px;height:25px;background:linear-gradient(#e2e2e2,#cecece);border:1px solid #a6a6a6;border-radius:0 2px 2px 0;box-sizing:border-box;"></div>
<svg style="position:absolute;left:1196.5px;top:660.5px" width="6" height="16"><path d="M0 5H6L3 2Z" fill="#555"/><path d="M0 11H6L3 14Z" fill="#bdbdbd"/></svg>
<div style="position:absolute;left:1132px;top:657px;width:60px;height:23px;overflow:hidden"><div style="position:absolute;right:4px;top:2.5px;line-height:18px;font-size:13.5px;color:#1e1e1e;white-space:nowrap">(par défaut)</div></div>
<div style="position:absolute;right:474px;top:693.5px;line-height:18px;font-size:13.5px;color:#303030;font-weight:normal;white-space:nowrap;">Pilot<u>e</u> MIDI :</div>
<div style="position:absolute;left:1131px;top:691px;width:76px;height:24px;background:linear-gradient(#e0e0e0,#d0d0d0);border:1px solid #a6a6a6;border-radius:2px;box-sizing:border-box;"></div>
<svg style="position:absolute;left:1193.5px;top:695.0px" width="7" height="16"><path d="M0 6H7L3.5 2Z" fill="#4a4a4a"/><path d="M0 10H7L3.5 14Z" fill="#4a4a4a"/></svg>
<div style="position:absolute;left:1136px;top:694.0px;line-height:18px;font-size:13.5px;color:#1e1e1e;font-weight:normal;white-space:nowrap;">aucun</div>
<div style="position:absolute;left:339px;top:736.0px;line-height:18px;font-size:13.5px;color:#303030;font-weight:normal;white-space:nowrap;">Suffi<u>x</u>e Serveur :</div>
<div style="position:absolute;left:443px;top:732px;width:433px;height:25px;background:#fdfdfd;border:1px solid #a6a6a6;border-radius:2px;box-sizing:border-box;"></div>
<div style="position:absolute;left:851px;top:732px;width:25px;height:25px;background:linear-gradient(#e2e2e2,#cecece);border:1px solid #a6a6a6;border-radius:0 2px 2px 0;box-sizing:border-box;"></div>
<svg style="position:absolute;left:859.5px;top:743.0px" width="8" height="5"><path d="M0 0H8L4.0 5Z" fill="#4a4a4a"/></svg>
<div style="position:absolute;left:449px;top:735.5px;line-height:18px;font-size:13.5px;color:#1e1e1e;font-weight:normal;white-space:nowrap;"></div>
<div style="position:absolute;left:881px;top:736.5px;line-height:17px;font-size:13.3px;color:#303030;font-weight:normal;white-space:nowrap;"><u>R</u>etard du démarrage :</div>
<div style="position:absolute;left:1021px;top:732px;width:52px;height:25px;background:#fdfdfd;border:1px solid #a6a6a6;border-radius:2px;box-sizing:border-box;"></div>
<div style="position:absolute;left:1058px;top:732px;width:15px;height:25px;background:linear-gradient(#e2e2e2,#cecece);border:1px solid #a6a6a6;border-radius:0 2px 2px 0;box-sizing:border-box;"></div>
<svg style="position:absolute;left:1062.5px;top:736.5px" width="6" height="16"><path d="M0 5H6L3 2Z" fill="#555"/><path d="M0 11H6L3 14Z" fill="#555"/></svg>
<div style="position:absolute;left:1026px;top:735.5px;line-height:18px;font-size:13.5px;color:#1e1e1e;font-weight:normal;white-space:nowrap;">2s</div>
<div style="position:absolute;left:1079px;top:736.0px;line-height:18px;font-size:13.5px;color:#303030;font-weight:normal;white-space:nowrap;">Latence :</div>
<div style="position:absolute;left:1136px;top:731px;width:72px;height:27px;background:#d8d8d8;border-top:1px solid #8a8a8a;border-left:1px solid #8a8a8a;border-bottom:1px solid #fff;border-right:1px solid #fff;box-sizing:border-box;"></div>
<div style="position:absolute;left:972px;width:400px;text-align:center;top:736.0px;line-height:18px;font-size:13.5px;color:#1e1e1e;font-weight:normal;white-space:nowrap;">10.7 ms</div>
<div style="position:absolute;left:1043px;top:780px;width:83px;height:24px;background:linear-gradient(#e6e6e6,#d2d2d2);border:1px solid #a2a2a2;border-radius:2px;box-sizing:border-box;"></div>
<div style="position:absolute;left:884.5px;width:400px;text-align:center;top:783.0px;line-height:18px;font-size:13.5px;color:#1e1e1e;font-weight:normal;white-space:nowrap;"><u>A</u>nnuler</div>
<div style="position:absolute;left:1134px;top:780px;width:83px;height:24px;background:linear-gradient(#d0d0d0,#c6c6c6);border:1px solid #b6b6b6;border-radius:2px;box-sizing:border-box;"></div>
<div style="position:absolute;left:975.5px;width:400px;text-align:center;top:783.0px;line-height:18px;font-size:13.5px;color:#969696;font-weight:normal;white-space:nowrap;"><u>O</u>K</div>
</body></html>
